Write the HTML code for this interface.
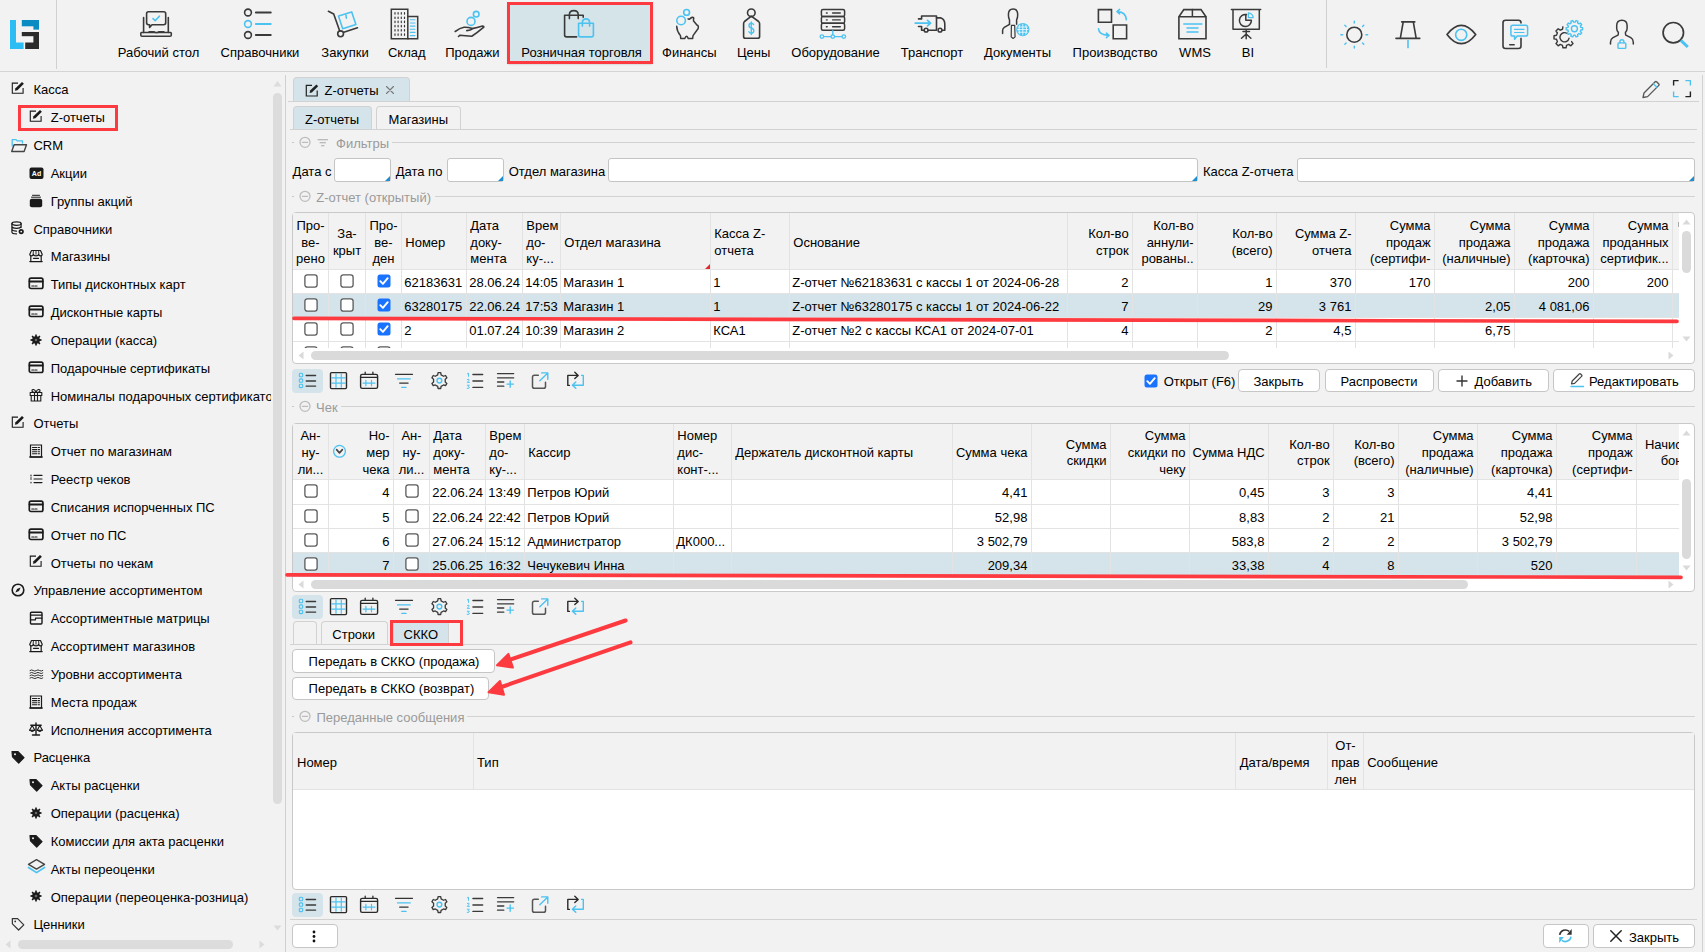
<!DOCTYPE html><html><head><meta charset="utf-8"><style>
html,body{margin:0;padding:0;}
body{width:1705px;height:952px;overflow:hidden;position:relative;background:#f2f2f2;font-family:"Liberation Sans",sans-serif;font-size:13px;color:#000;}
.a{position:absolute;box-sizing:border-box;}
.t{position:absolute;line-height:17px;white-space:nowrap;}
.g{color:#9a9a9a;}
</style></head><body>
<div class="a" style="left:0px;top:71px;width:1705px;height:1px;background:#d4d4d4"></div><div class="a" style="left:56px;top:0px;width:1px;height:69px;background:#d0d0d0"></div><div class="a" style="left:1326px;top:0px;width:1px;height:68px;background:#d0d0d0"></div><svg class="a" style="left:10px;top:20px" width="29" height="29" viewBox="0 0 29 29" fill="none" stroke-linecap="round" stroke-linejoin="round"><g stroke="none">
<rect x="0" y="0" width="6" height="29" fill="#2bbdf4"/><rect x="0" y="22.5" width="13.6" height="6.5" fill="#2bbdf4"/>
<rect x="11.8" y="0" width="17.2" height="6.3" fill="#0a8bc2"/><rect x="23.4" y="6" width="5.6" height="3.6" fill="#0a8bc2"/>
<rect x="11.8" y="12" width="17.2" height="4.2" fill="#2b2b2b"/><rect x="23.4" y="16" width="5.6" height="13" fill="#2b2b2b"/><rect x="15.2" y="22.5" width="13.8" height="6.5" fill="#2b2b2b"/>
</g></svg><div class="a" style="left:508px;top:3px;width:144px;height:60px;background:#d5e4e9;box-shadow:0 1px 2px rgba(0,0,0,0.25)"></div><div class="a" style="left:507px;top:2px;width:146px;height:62px;border:3px solid #fd3a3f"></div><div class="t " style="left:-41.5px;width:400px;text-align:center;top:44.0px;">Рабочий стол</div><div class="t " style="left:60.0px;width:400px;text-align:center;top:44.0px;">Справочники</div><div class="t " style="left:145.0px;width:400px;text-align:center;top:44.0px;">Закупки</div><div class="t " style="left:206.8px;width:400px;text-align:center;top:44.0px;">Склад</div><div class="t " style="left:272.3px;width:400px;text-align:center;top:44.0px;">Продажи</div><div class="t " style="left:381.6px;width:400px;text-align:center;top:44.0px;">Розничная торговля</div><div class="t " style="left:489.3px;width:400px;text-align:center;top:44.0px;">Финансы</div><div class="t " style="left:553.7px;width:400px;text-align:center;top:44.0px;">Цены</div><div class="t " style="left:635.5px;width:400px;text-align:center;top:44.0px;">Оборудование</div><div class="t " style="left:732.0px;width:400px;text-align:center;top:44.0px;">Транспорт</div><div class="t " style="left:817.6px;width:400px;text-align:center;top:44.0px;">Документы</div><div class="t " style="left:915.0px;width:400px;text-align:center;top:44.0px;">Производство</div><div class="t " style="left:995.0px;width:400px;text-align:center;top:44.0px;">WMS</div><div class="t " style="left:1048.0px;width:400px;text-align:center;top:44.0px;">BI</div><svg class="a" style="left:0;top:0" width="1705" height="72" fill="none" stroke-linecap="round" stroke-linejoin="round"><path d="M143.6 17.5V32.5M168.3 17.5V32.5" stroke="#3a3a3a" stroke-width="1.6" /><path d="M141.5 32.5H170.5Q171.3 32.5 171.3 33.5V35Q171.3 36.3 170 36.3H142Q140.8 36.3 140.8 35V33.5Q140.8 32.5 141.5 32.5Z" stroke="#3a3a3a" stroke-width="1.6" /><path d="M149 31.6H153.8L155.5 32.6H157.5L159 31.6H164" stroke="#3a3a3a" stroke-width="1.3" /><path d="M148.5 11.8H163.8Q165.7 11.8 165.7 13.7V22.8Q165.7 24.7 163.8 24.7H152L149.6 27.4V24.7H148.5Q146.6 24.7 146.6 22.8V13.7Q146.6 11.8 148.5 11.8Z" stroke="#3a3a3a" stroke-width="1.6" /><path d="M153 18.6L155.2 20.6L159.4 16.2" stroke="#4cc2f1" stroke-width="1.6" /><circle cx="248" cy="12.5" r="3.4" stroke="#3a3a3a" stroke-width="1.6" fill="none"/><path d="M255.8 12.5H270.8" stroke="#3a3a3a" stroke-width="1.8" /><circle cx="248" cy="24" r="3.4" stroke="#4cc2f1" stroke-width="1.6" fill="none"/><path d="M255.8 24H270.8" stroke="#4cc2f1" stroke-width="1.8" /><circle cx="248" cy="35" r="3.4" stroke="#3a3a3a" stroke-width="1.6" fill="none"/><path d="M255.8 35H270.8" stroke="#3a3a3a" stroke-width="1.8" /><path d="M328.4 11.3L333.7 14L339.8 31.3" stroke="#3a3a3a" stroke-width="1.6" /><circle cx="340.6" cy="33.8" r="2.9" stroke="#3a3a3a" stroke-width="1.6" fill="none"/><path d="M343.8 32.2L357.5 27.7" stroke="#3a3a3a" stroke-width="1.6" /><path d="M338.5 16.1L351.7 11.9L355.9 24.5L342.7 28.8Z" stroke="#4cc2f1" stroke-width="1.6" /><path d="M345.9 15L346.4 18.2" stroke="#4cc2f1" stroke-width="1.6" /><path d="M391.3 9.2H407.8V38.8H391.3Z" stroke="#3a3a3a" stroke-width="1.5" stroke-linejoin="miter"/><path d="M407.8 16.4H417.7V38.8H407.8" stroke="#3a3a3a" stroke-width="1.5" stroke-linejoin="miter"/><path d="M395 12.700000000000001V14.1M395 17.0V18.4M395 21.2V22.599999999999998M395 25.400000000000002V26.8M395 29.6V31.0M395 33.9V35.300000000000004M398.1 12.700000000000001V14.1M398.1 17.0V18.4M398.1 21.2V22.599999999999998M398.1 25.400000000000002V26.8M398.1 29.6V31.0M398.1 33.9V35.300000000000004M401.3 12.700000000000001V14.1M401.3 17.0V18.4M401.3 21.2V22.599999999999998M401.3 25.400000000000002V26.8M401.3 29.6V31.0M401.3 33.9V35.300000000000004M404.5 12.700000000000001V14.1M404.5 17.0V18.4M404.5 21.2V22.599999999999998M404.5 25.400000000000002V26.8M404.5 29.6V31.0M404.5 33.9V35.300000000000004" stroke="#3a3a3a" stroke-width="1.2" /><path d="M410.3 19.8H415M410.3 23H415M410.3 26.1H415M410.3 29.3H415M410.3 32.4H415M410.3 35.6H415" stroke="#4cc2f1" stroke-width="1.1" /><circle cx="471" cy="21.4" r="4.0" stroke="#4cc2f1" stroke-width="1.6" fill="none"/><circle cx="476.2" cy="14.2" r="2.8" stroke="#4cc2f1" stroke-width="1.6" fill="none"/><path d="M455.2 31.5Q460 28 464 27.3Q468 27 472.2 28.6Q471.6 30.4 466.8 30.6" stroke="#3a3a3a" stroke-width="1.6" /><path d="M458.5 36.5L460 35.2Q465 35.7 471.8 36.2Q477 33 483.8 27.2Q484 26 482.5 26Q477 27.5 472.2 28.6" stroke="#3a3a3a" stroke-width="1.6" /><path d="M583.2 17.2V15.3H564.6V35Q564.6 36.9 566.5 36.9H576.6" stroke="#3a3a3a" stroke-width="1.6" /><path d="M569.4 18.6V14.6Q569.4 10.6 573.8 10.6Q578.2 10.6 578.2 14.6V18.6" stroke="#3a3a3a" stroke-width="1.6" /><path d="M578.6 23.3H593.4V35Q593.4 36.9 591.5 36.9H580.5Q578.6 36.9 578.6 35Z" stroke="#4cc2f1" stroke-width="1.6" /><path d="M582.4 26.1V22.6Q582.4 18.9 586 18.9Q589.6 18.9 589.6 22.6V26.1" stroke="#4cc2f1" stroke-width="1.6" /><circle cx="681.1" cy="20.5" r="4.3" stroke="#4cc2f1" stroke-width="1.6" fill="none"/><circle cx="686.6" cy="12.4" r="2.9" stroke="#4cc2f1" stroke-width="1.6" fill="none"/><path d="M676.7 26.2Q676.8 31 680.3 35.4Q680.7 36.3 680.7 38.4H684.9Q685.5 36.3 686.6 36.3Q687.6 36.3 688.1 38.4H692.7Q692.7 36.3 693.2 35.4L696.9 30.2Q698.6 28.5 698.4 26.6Q698.2 25.4 696.9 25L693.6 21Q693.2 19.5 693.8 18.2Q693.2 17 692.3 17.2Q690.8 17.9 689.7 19Q688.8 19.4 688.1 18.9" stroke="#3a3a3a" stroke-width="1.5" /><circle cx="751.3" cy="12.8" r="3.8" stroke="#3a3a3a" stroke-width="1.6" fill="none"/><path d="M751.3 16.2L744.5 21.5Q743.6 22.4 743.6 23.8V36.5Q743.6 38.3 745.4 38.3H757.6Q759.6 38.3 759.6 36.5V23.8Q759.6 22.4 758.6 21.5Z" stroke="#3a3a3a" stroke-width="1.6" /><path d="M753.6 24.5Q753 23.3 751.3 23.3Q749 23.3 749 25.5Q749 27.6 751.3 28Q753.8 28.5 753.8 30.8Q753.8 33.2 751.3 33.2Q749.4 33.2 748.8 31.8M751.3 22V34.5" stroke="#4cc2f1" stroke-width="1.4" /><path d="M823 9.5H843Q844.6 9.5 844.6 11.0V15.100000000000001Q844.6 16.6 843 16.6H823Q821.4 16.6 821.4 15.100000000000001V11.0Q821.4 9.5 823 9.5Z" stroke="#3a3a3a" stroke-width="1.5" /><path d="M826.4 13.05H827.2M832.6 13.05H840.3" stroke="#3a3a3a" stroke-width="1.4" /><path d="M823 16.6H843Q844.6 16.6 844.6 18.1V21.7Q844.6 23.2 843 23.2H823Q821.4 23.2 821.4 21.7V18.1Q821.4 16.6 823 16.6Z" stroke="#3a3a3a" stroke-width="1.5" /><path d="M826.4 19.9H827.2M832.6 19.9H840.3" stroke="#3a3a3a" stroke-width="1.4" /><path d="M823 23.2H843Q844.6 23.2 844.6 24.7V28.7Q844.6 30.2 843 30.2H823Q821.4 30.2 821.4 28.7V24.7Q821.4 23.2 823 23.2Z" stroke="#3a3a3a" stroke-width="1.5" /><path d="M826.4 26.7H827.2M832.6 26.7H840.3" stroke="#3a3a3a" stroke-width="1.4" /><path d="M832.8 30.8V34.8M823.8 36.6H830.9M834.7 36.6H841.9" stroke="#4cc2f1" stroke-width="1.4" /><circle cx="821.9" cy="36.6" r="1.8" stroke="#4cc2f1" stroke-width="1.3" fill="none"/><circle cx="832.8" cy="36.6" r="1.8" stroke="#4cc2f1" stroke-width="1.3" fill="none"/><circle cx="843.8" cy="36.6" r="1.8" stroke="#4cc2f1" stroke-width="1.3" fill="none"/><path d="M918.5 18.9H921.6V16H936.5V30.2H928M924.2 30.2H921.6V26.5M918.5 26.5H921.6" stroke="#3a3a3a" stroke-width="1.6" /><path d="M936.5 17.9H941Q944.8 19.5 944.8 24V30.2H942" stroke="#3a3a3a" stroke-width="1.6" /><circle cx="926.1" cy="30.2" r="1.9" stroke="#3a3a3a" stroke-width="1.5" fill="none"/><circle cx="940" cy="30.2" r="1.9" stroke="#3a3a3a" stroke-width="1.5" fill="none"/><path d="M915.2 23.1H930.6M927.5 20.3L930.6 23.1L927.5 25.9" stroke="#4cc2f1" stroke-width="1.7" /><path d="M1009.5 24.3V19.8Q1008.4 18 1008.4 14.7Q1008.4 9 1013.1 9Q1017.7 9 1017.7 14.7Q1017.7 18 1016.6 19.8V24.3" stroke="#3a3a3a" stroke-width="1.5" /><path d="M1009.5 24.3L1004.3 27.4Q1002.6 28.6 1002.6 30.5V33.6" stroke="#3a3a3a" stroke-width="1.5" /><path d="M1011.4 25.4H1014.7L1015.1 36.9L1013.1 38.5L1011.2 36.9Z" stroke="#3a3a3a" stroke-width="1.2" /><circle cx="1022.8" cy="29.6" r="5.9" stroke="#4cc2f1" stroke-width="1.6" fill="#4cc2f1"/><path d="M1017.5 29.6H1028.1M1022.8 24.2V35M1019.7 25.2Q1018 29.6 1019.7 34M1025.9 25.2Q1027.6 29.6 1025.9 34M1018.3 27H1027.3M1018.3 32.2H1027.3" stroke="#fff" stroke-width="0.8" /><path d="M1098.4 9.6H1111.5V22.2H1098.4Z" stroke="#3a3a3a" stroke-width="1.6" stroke-linejoin="miter"/><path d="M1113.2 25H1126.6V38.7H1113.2Z" stroke="#3a3a3a" stroke-width="1.6" stroke-linejoin="miter"/><path d="M1126.3 19.8Q1126 12 1117.5 11.6M1119.6 9.4L1117 11.6L1119.6 13.8" stroke="#4cc2f1" stroke-width="1.6" /><path d="M1098.5 28.8Q1099 35 1108.5 35.4M1106.4 33.2L1109 35.4L1106.4 37.6" stroke="#4cc2f1" stroke-width="1.6" /><path d="M1183.8 9.6H1201L1206 16.8V38.7H1178.9V16.8Z" stroke="#3a3a3a" stroke-width="1.6" stroke-linejoin="miter"/><path d="M1179.2 16.8H1205.8M1192.4 9.6V16.8" stroke="#3a3a3a" stroke-width="1.5" /><path d="M1183.8 23.9H1201.9M1187 28H1198M1187 32.1H1198" stroke="#4cc2f1" stroke-width="1.5" /><path d="M1231.4 9.6H1260.7M1233 9.6V29.3H1259.3V9.6M1246.2 29.3V38.7M1241.5 38.2L1246.2 34L1250.9 38.2M1243 31.5H1249.5" stroke="#3a3a3a" stroke-width="1.5" /><path d="M1246.5 14.6A6 6 0 1 0 1251.4 20.3H1245.8V14.6" stroke="#3a3a3a" stroke-width="1.5" /><path d="M1248.4 12.8A5.5 5.5 0 0 1 1253.2 17.6H1248.4Z" stroke="#4cc2f1" stroke-width="1.3" /><path d="M1365.90 34.70L1367.70 34.70M1362.50 42.90L1363.78 44.18M1354.30 46.30L1354.30 48.10M1346.10 42.90L1344.82 44.18M1342.70 34.70L1340.90 34.70M1346.10 26.50L1344.82 25.22M1354.30 23.10L1354.30 21.30M1362.50 26.50L1363.78 25.22" stroke="#4cc2f1" stroke-width="1.4" /><circle cx="1354.3" cy="34.7" r="7.5" stroke="#3a3a3a" stroke-width="1.6" fill="none"/><path d="M1401.7 21.9H1414.8M1403.2 22L1400.3 38.4M1413.3 22L1416.2 38.4M1396 38.4H1419.8" stroke="#3a3a3a" stroke-width="1.6" /><path d="M1408 40.5V47.6" stroke="#4cc2f1" stroke-width="1.6" /><path d="M1447 34.5Q1454 25.3 1461.3 25.3Q1468.7 25.3 1475.7 34.5Q1468.7 43.7 1461.3 43.7Q1454 43.7 1447 34.5Z" stroke="#3a3a3a" stroke-width="1.7" /><circle cx="1461.2" cy="34.8" r="5.6" stroke="#4cc2f1" stroke-width="1.6" fill="none"/><path d="M1505.5 20.3H1518.5Q1521 20.3 1521 22.8V46Q1521 48.5 1518.5 48.5H1505.5Q1503 48.5 1503 46V22.8Q1503 20.3 1505.5 20.3Z" stroke="#3a3a3a" stroke-width="1.6" /><path d="M1509.7 44.8H1514.2" stroke="#3a3a3a" stroke-width="1.4" /><path d="M1512.8 25.3H1525.7Q1527.6 25.3 1527.6 27.2V34.2Q1527.6 36.1 1525.7 36.1H1517L1514.6 39.3V36.1H1512.8Q1510.9 36.1 1510.9 34.2V27.2Q1510.9 25.3 1512.8 25.3Z" stroke="#f2f2f2" stroke-width="3.5" fill="#f2f2f2"/><path d="M1512.8 25.3H1525.7Q1527.6 25.3 1527.6 27.2V34.2Q1527.6 36.1 1525.7 36.1H1517L1514.6 39.3V36.1H1512.8Q1510.9 36.1 1510.9 34.2V27.2Q1510.9 25.3 1512.8 25.3Z" stroke="#4cc2f1" stroke-width="1.5" /><path d="M1514.5 29.3H1524M1514.5 32.5H1524" stroke="#4cc2f1" stroke-width="1.2" /><path d="M1571.61 41.58L1573.03 43.60L1570.80 45.83L1568.78 44.41L1566.50 45.36L1566.08 47.78L1562.92 47.78L1562.50 45.36L1560.22 44.41L1558.20 45.83L1555.97 43.60L1557.39 41.58L1556.44 39.30L1554.02 38.88L1554.02 35.72L1556.44 35.30L1557.39 33.02L1555.97 31.00L1558.20 28.77L1560.22 30.19L1562.50 29.24L1562.92 26.82" stroke="#3a3a3a" stroke-width="1.4" /><path d="M1567.2 33.5A4.6 4.6 0 1 0 1569 38.3" stroke="#3a3a3a" stroke-width="1.4" /><path d="M1580.88 27.42L1582.64 27.71L1582.64 29.69L1580.88 29.98L1580.39 31.47L1581.65 32.74L1580.49 34.34L1578.89 33.54L1577.62 34.46L1577.89 36.23L1576.01 36.84L1575.19 35.25L1573.61 35.25L1572.79 36.84L1570.91 36.23L1571.18 34.46L1569.91 33.54L1568.31 34.34L1567.15 32.74L1568.41 31.47L1567.92 29.98L1566.16 29.69L1566.16 27.71L1567.92 27.42L1568.41 25.93L1567.15 24.66L1568.31 23.06L1569.91 23.86L1571.18 22.94L1570.91 21.17L1572.79 20.56L1573.61 22.15L1575.19 22.15L1576.01 20.56L1577.89 21.17L1577.62 22.94L1578.89 23.86L1580.49 23.06L1581.65 24.66L1580.39 25.93Z" stroke="#4cc2f1" stroke-width="1.4" /><circle cx="1574.4" cy="28.7" r="3.0" stroke="#4cc2f1" stroke-width="1.4" fill="none"/><path d="M1610.5 44V42.2Q1610.5 39.2 1613 37.7L1618 35.1Q1618.6 34 1618.3 32.2Q1616.7 30.6 1616.7 28.5V25.6Q1616.7 20.3 1621.9 20.3Q1627.1 20.3 1627.1 25.6V28.5Q1627.1 30.6 1625.5 32.2Q1625.2 34 1625.8 35.1L1630.8 37.7Q1633.3 39.2 1633.3 42.2V44" stroke="#3a3a3a" stroke-width="1.5" /><rect x="1618" y="42.9" width="7.8" height="5.5" rx="0.8" stroke="#4cc2f1" stroke-width="1.4" fill="#f2f2f2"/><path d="M1619.9 42.9V41.6Q1619.9 39.8 1621.9 39.8Q1623.9 39.8 1623.9 41.6V42.9" stroke="#4cc2f1" stroke-width="1.4" /><circle cx="1673.3" cy="32.7" r="10.2" stroke="#3a3a3a" stroke-width="1.7" fill="none"/><path d="M1680.8 40.3L1687.8 47" stroke="#4cc2f1" stroke-width="3" stroke-linecap="butt"/></svg><div class="a" style="left:285px;top:75px;width:1px;height:877px;background:#d0d0d0"></div><div class="a" style="left:0;top:72px;width:271px;height:868px;overflow:hidden"><div class="t " style="left:33.4px;top:9.4px;">Касса</div><div class="t " style="left:50.7px;top:37.2px;">Z-отчеты</div><div class="t " style="left:33.4px;top:65.1px;">CRM</div><div class="t " style="left:50.7px;top:92.9px;">Акции</div><div class="t " style="left:50.7px;top:120.7px;">Группы акций</div><div class="t " style="left:33.4px;top:148.5px;">Справочники</div><div class="t " style="left:50.7px;top:176.4px;">Магазины</div><div class="t " style="left:50.7px;top:204.2px;">Типы дисконтных карт</div><div class="t " style="left:50.7px;top:232.0px;">Дисконтные карты</div><div class="t " style="left:50.7px;top:259.9px;">Операции (касса)</div><div class="t " style="left:50.7px;top:287.7px;">Подарочные сертификаты</div><div class="t " style="left:50.7px;top:315.5px;">Номиналы подарочных сертификатов</div><div class="t " style="left:33.4px;top:343.4px;">Отчеты</div><div class="t " style="left:50.7px;top:371.2px;">Отчет по магазинам</div><div class="t " style="left:50.7px;top:399.0px;">Реестр чеков</div><div class="t " style="left:50.7px;top:426.9px;">Списания испорченных ПС</div><div class="t " style="left:50.7px;top:454.7px;">Отчет по ПС</div><div class="t " style="left:50.7px;top:482.5px;">Отчеты по чекам</div><div class="t " style="left:33.4px;top:510.3px;">Управление ассортиментом</div><div class="t " style="left:50.7px;top:538.2px;">Ассортиментные матрицы</div><div class="t " style="left:50.7px;top:566.0px;">Ассортимент магазинов</div><div class="t " style="left:50.7px;top:593.8px;">Уровни ассортимента</div><div class="t " style="left:50.7px;top:621.7px;">Места продаж</div><div class="t " style="left:50.7px;top:649.5px;">Исполнения ассортимента</div><div class="t " style="left:33.4px;top:677.3px;">Расценка</div><div class="t " style="left:50.7px;top:705.1px;">Акты расценки</div><div class="t " style="left:50.7px;top:733.0px;">Операции (расценка)</div><div class="t " style="left:50.7px;top:760.8px;">Комиссии для акта расценки</div><div class="t " style="left:50.7px;top:788.6px;">Акты переоценки</div><div class="t " style="left:50.7px;top:816.5px;">Операции (переоценка-розница)</div><div class="t " style="left:33.4px;top:844.3px;">Ценники</div></div><svg class="a" style="left:11.3px;top:82.2px;overflow:visible" width="14" height="14" fill="none" stroke-linecap="round" stroke-linejoin="round"><path d="M7 1.1H1.3V11.3H12.1V6" stroke="#1a1a1a" stroke-width="1.1" stroke-linecap="butt" stroke-linejoin="miter"/><path d="M3.9 8.8L4.5 6.3L11 -0.1L12.9 1.8L6.4 8.2Z" fill="#1a1a1a"/></svg><svg class="a" style="left:28.5px;top:110.0px;overflow:visible" width="14" height="14" fill="none" stroke-linecap="round" stroke-linejoin="round"><path d="M7 1.1H1.3V11.3H12.1V6" stroke="#1a1a1a" stroke-width="1.1" stroke-linecap="butt" stroke-linejoin="miter"/><path d="M3.9 8.8L4.5 6.3L11 -0.1L12.9 1.8L6.4 8.2Z" fill="#1a1a1a"/></svg><svg class="a" style="left:11.3px;top:137.9px;overflow:visible" width="14" height="14" fill="none" stroke-linecap="round" stroke-linejoin="round"><path d="M1.2 8V1.6H5L6.2 2.8H11.5V5" stroke="#4cc2f1" stroke-width="1.3"/><path d="M3.6 6.3H16L13.6 13H1.2Z" stroke="#444" stroke-width="1.4" transform="translate(-0.5,0.5)"/></svg><svg class="a" style="left:28.5px;top:165.7px;overflow:visible" width="14" height="14" fill="none" stroke-linecap="round" stroke-linejoin="round"><rect x="0.5" y="1.5" width="14" height="11.5" rx="2" fill="#1a1a1a"/><text x="7.5" y="10" font-family="Liberation Sans" font-weight="bold" font-size="7" fill="#fff" text-anchor="middle">Ad</text></svg><svg class="a" style="left:28.5px;top:193.5px;overflow:visible" width="14" height="14" fill="none" stroke-linecap="round" stroke-linejoin="round"><path d="M3.5 1.3H10.5M2.5 3.2H11.5" stroke="#1a1a1a" stroke-width="1"/><rect x="0.8" y="4.8" width="12.4" height="8.4" rx="2" fill="#1a1a1a"/></svg><svg class="a" style="left:11.3px;top:221.3px;overflow:visible" width="14" height="14" fill="none" stroke-linecap="round" stroke-linejoin="round"><ellipse cx="5.5" cy="2.6" rx="4.6" ry="1.8" stroke="#1a1a1a" stroke-width="1.2"/><path d="M0.9 2.6V11Q0.9 12.9 5.5 12.9M10.1 2.6V6.5M0.9 5.5Q1.5 7.3 5.5 7.3Q9.5 7.3 10.1 5.5M0.9 8.4Q1.5 10.1 5.5 10.2" stroke="#1a1a1a" stroke-width="1.2"/><circle cx="10.2" cy="10.6" r="2.6" fill="#1a1a1a"/><circle cx="10.2" cy="10.6" r="0.9" fill="#f2f2f2"/></svg><svg class="a" style="left:28.5px;top:249.2px;overflow:visible" width="14" height="14" fill="none" stroke-linecap="round" stroke-linejoin="round"><path d="M2.5 1.5H11.5L13.2 5.2Q13.2 6.8 11.5 6.8Q10 6.8 9.6 5.4Q9.2 6.8 7 6.8Q4.8 6.8 4.4 5.4Q4 6.8 2.5 6.8Q0.8 6.8 0.8 5.2Z" stroke="#1a1a1a" stroke-width="1.2"/><path d="M4.4 1.8L4.1 5.2M9.6 1.8L9.9 5.2M7 1.8V5.2" stroke="#1a1a1a" stroke-width="0.9"/><path d="M1.8 7V12.6H12.2V7M0.8 12.6H13.2M4.5 9.3H9.5" stroke="#1a1a1a" stroke-width="1.2"/></svg><svg class="a" style="left:28.5px;top:277.0px;overflow:visible" width="14" height="14" fill="none" stroke-linecap="round" stroke-linejoin="round"><rect x="0.3" y="1.1" width="13.6" height="10.4" rx="1.7" stroke="#1a1a1a" stroke-width="1.7"/><path d="M0.7 4.5H13.5" stroke="#1a1a1a" stroke-width="2.2"/><path d="M2.8 9H4.8M6 9H8" stroke="#1a1a1a" stroke-width="1.2"/></svg><svg class="a" style="left:28.5px;top:304.8px;overflow:visible" width="14" height="14" fill="none" stroke-linecap="round" stroke-linejoin="round"><rect x="0.3" y="1.1" width="13.6" height="10.4" rx="1.7" stroke="#1a1a1a" stroke-width="1.7"/><path d="M0.7 4.5H13.5" stroke="#1a1a1a" stroke-width="2.2"/><path d="M2.8 9H4.8M6 9H8" stroke="#1a1a1a" stroke-width="1.2"/></svg><svg class="a" style="left:28.5px;top:332.7px;overflow:visible" width="14" height="14" fill="none" stroke-linecap="round" stroke-linejoin="round"><path d="M10.79 6.09L12.55 6.23L12.55 7.77L10.79 7.91L10.33 9.04L11.46 10.38L10.38 11.46L9.04 10.33L7.91 10.79L7.77 12.55L6.23 12.55L6.09 10.79L4.96 10.33L3.62 11.46L2.54 10.38L3.67 9.04L3.21 7.91L1.45 7.77L1.45 6.23L3.21 6.09L3.67 4.96L2.54 3.62L3.62 2.54L4.96 3.67L6.09 3.21L6.23 1.45L7.77 1.45L7.91 3.21L9.04 3.67L10.38 2.54L11.46 3.62L10.33 4.96Z" fill="#1a1a1a"/><circle cx="7" cy="7" r="1.3" fill="#666"/></svg><svg class="a" style="left:28.5px;top:360.5px;overflow:visible" width="14" height="14" fill="none" stroke-linecap="round" stroke-linejoin="round"><rect x="0.3" y="1.1" width="13.6" height="10.4" rx="1.7" stroke="#1a1a1a" stroke-width="1.7"/><path d="M0.7 4.5H13.5" stroke="#1a1a1a" stroke-width="2.2"/><path d="M2.8 9H4.8M6 9H8" stroke="#1a1a1a" stroke-width="1.2"/></svg><svg class="a" style="left:28.5px;top:388.3px;overflow:visible" width="14" height="14" fill="none" stroke-linecap="round" stroke-linejoin="round"><rect x="1.2" y="4.5" width="11.6" height="3" stroke="#1a1a1a" stroke-width="1.1"/><path d="M2.2 7.5V13H11.8V7.5M5.5 4.5V13M8.5 4.5V13M5.5 4.3Q3 4.3 3 2.8Q3 1.3 4.6 1.5Q6.3 1.9 7 4.3Q7.7 1.9 9.4 1.5Q11 1.3 11 2.8Q11 4.3 8.5 4.3" stroke="#1a1a1a" stroke-width="1.1"/></svg><svg class="a" style="left:11.3px;top:416.2px;overflow:visible" width="14" height="14" fill="none" stroke-linecap="round" stroke-linejoin="round"><path d="M7 1.1H1.3V11.3H12.1V6" stroke="#1a1a1a" stroke-width="1.1" stroke-linecap="butt" stroke-linejoin="miter"/><path d="M3.9 8.8L4.5 6.3L11 -0.1L12.9 1.8L6.4 8.2Z" fill="#1a1a1a"/></svg><svg class="a" style="left:28.5px;top:444.0px;overflow:visible" width="14" height="14" fill="none" stroke-linecap="round" stroke-linejoin="round"><path d="M1.5 1H12.5V13H1.5Z" stroke="#1a1a1a" stroke-width="1.2" stroke-linejoin="miter"/><path d="M0.8 13H13.2" stroke="#1a1a1a" stroke-width="1.3"/><path d="M3.5 3.5H10.5M3.5 5.6H10.5M3.5 7.7H10.5M3.5 9.8H10.5" stroke="#1a1a1a" stroke-width="1.1"/><path d="M8.5 3V11" stroke="#f2f2f2" stroke-width="0.6"/></svg><svg class="a" style="left:28.5px;top:471.8px;overflow:visible" width="14" height="14" fill="none" stroke-linecap="round" stroke-linejoin="round"><path d="M2 3.2V3.6M2 6.8V7.2M2 10.4V10.8" stroke="#1a1a1a" stroke-width="1.2"/><path d="M5 3.4H13M5 7H13M5 10.6H13" stroke="#1a1a1a" stroke-width="1.1"/><path d="M2 5V6" stroke="#1a1a1a" stroke-width="0.8"/></svg><svg class="a" style="left:28.5px;top:499.6px;overflow:visible" width="14" height="14" fill="none" stroke-linecap="round" stroke-linejoin="round"><rect x="0.3" y="1.1" width="13.6" height="10.4" rx="1.7" stroke="#1a1a1a" stroke-width="1.7"/><path d="M0.7 4.5H13.5" stroke="#1a1a1a" stroke-width="2.2"/><path d="M2.8 9H4.8M6 9H8" stroke="#1a1a1a" stroke-width="1.2"/></svg><svg class="a" style="left:28.5px;top:527.5px;overflow:visible" width="14" height="14" fill="none" stroke-linecap="round" stroke-linejoin="round"><rect x="0.3" y="1.1" width="13.6" height="10.4" rx="1.7" stroke="#1a1a1a" stroke-width="1.7"/><path d="M0.7 4.5H13.5" stroke="#1a1a1a" stroke-width="2.2"/><path d="M2.8 9H4.8M6 9H8" stroke="#1a1a1a" stroke-width="1.2"/></svg><svg class="a" style="left:28.5px;top:555.3px;overflow:visible" width="14" height="14" fill="none" stroke-linecap="round" stroke-linejoin="round"><path d="M7 1.1H1.3V11.3H12.1V6" stroke="#1a1a1a" stroke-width="1.1" stroke-linecap="butt" stroke-linejoin="miter"/><path d="M3.9 8.8L4.5 6.3L11 -0.1L12.9 1.8L6.4 8.2Z" fill="#1a1a1a"/></svg><svg class="a" style="left:11.3px;top:583.1px;overflow:visible" width="14" height="14" fill="none" stroke-linecap="round" stroke-linejoin="round"><circle cx="7" cy="7" r="5.8" stroke="#1a1a1a" stroke-width="1.6"/><path d="M9.6 4.4L8 8L4.4 9.6L6 6Z" fill="#1a1a1a"/></svg><svg class="a" style="left:28.5px;top:611.0px;overflow:visible" width="14" height="14" fill="none" stroke-linecap="round" stroke-linejoin="round"><rect x="1.5" y="1.2" width="11.5" height="11.8" rx="1" stroke="#1a1a1a" stroke-width="1.4"/><path d="M1.8 4.2H12.8M6.5 7.2H12.8M1.8 8.8H6.5M6.5 7.2V8.8" stroke="#1a1a1a" stroke-width="1.2"/></svg><svg class="a" style="left:28.5px;top:638.8px;overflow:visible" width="14" height="14" fill="none" stroke-linecap="round" stroke-linejoin="round"><path d="M2.5 1.5H11.5L13.2 5.2Q13.2 6.8 11.5 6.8Q10 6.8 9.6 5.4Q9.2 6.8 7 6.8Q4.8 6.8 4.4 5.4Q4 6.8 2.5 6.8Q0.8 6.8 0.8 5.2Z" stroke="#1a1a1a" stroke-width="1.2"/><path d="M4.4 1.8L4.1 5.2M9.6 1.8L9.9 5.2M7 1.8V5.2" stroke="#1a1a1a" stroke-width="0.9"/><path d="M1.8 7V12.6H12.2V7M0.8 12.6H13.2M4.5 9.3H9.5" stroke="#1a1a1a" stroke-width="1.2"/></svg><svg class="a" style="left:28.5px;top:666.6px;overflow:visible" width="14" height="14" fill="none" stroke-linecap="round" stroke-linejoin="round"><path d="M1 3.5Q2.6 2.3 4.2 3.5T7.4 3.5T10.6 3.5T13.8 3.5" stroke="#1a1a1a" stroke-width="0.9"/><path d="M1 6Q2.6 4.8 4.2 6T7.4 6T10.6 6T13.8 6" stroke="#1a1a1a" stroke-width="0.9"/><path d="M1 8.5Q2.6 7.3 4.2 8.5T7.4 8.5T10.6 8.5T13.8 8.5" stroke="#1a1a1a" stroke-width="0.9"/><path d="M1 11Q2.6 9.8 4.2 11T7.4 11T10.6 11T13.8 11" stroke="#1a1a1a" stroke-width="0.9"/></svg><svg class="a" style="left:28.5px;top:694.5px;overflow:visible" width="14" height="14" fill="none" stroke-linecap="round" stroke-linejoin="round"><path d="M1.5 1H12.5V13H1.5Z" stroke="#1a1a1a" stroke-width="1.2" stroke-linejoin="miter"/><path d="M0.8 13H13.2" stroke="#1a1a1a" stroke-width="1.3"/><path d="M3.5 3.5H10.5M3.5 5.6H10.5M3.5 7.7H10.5M3.5 9.8H10.5" stroke="#1a1a1a" stroke-width="1.1"/><path d="M8.5 3V11" stroke="#f2f2f2" stroke-width="0.6"/></svg><svg class="a" style="left:28.5px;top:722.3px;overflow:visible" width="14" height="14" fill="none" stroke-linecap="round" stroke-linejoin="round"><path d="M7 1V12.5M3.5 13H10.5M1.8 3.2H12.2" stroke="#1a1a1a" stroke-width="1.4"/><path d="M3.2 3.5L0.6 8.3H5.8Z M10.8 3.5L8.2 8.3H13.4Z" stroke="#1a1a1a" stroke-width="1.1"/><path d="M0.6 8.3Q3.2 11 5.8 8.3M8.2 8.3Q10.8 11 13.4 8.3" fill="#1a1a1a" stroke="#1a1a1a" stroke-width="1"/></svg><svg class="a" style="left:11.3px;top:750.1px;overflow:visible" width="14" height="14" fill="none" stroke-linecap="round" stroke-linejoin="round"><path d="M1 1.5H6.8L13 7.7L7.7 13L1.5 6.8Z" fill="#1a1a1a" stroke="#1a1a1a" stroke-width="1.2"/><circle cx="4" cy="4.3" r="1" fill="#f2f2f2"/></svg><svg class="a" style="left:28.5px;top:778.0px;overflow:visible" width="14" height="14" fill="none" stroke-linecap="round" stroke-linejoin="round"><path d="M1 1.5H6.8L13 7.7L7.7 13L1.5 6.8Z" fill="#1a1a1a" stroke="#1a1a1a" stroke-width="1.2"/><circle cx="4" cy="4.3" r="1" fill="#f2f2f2"/></svg><svg class="a" style="left:28.5px;top:805.8px;overflow:visible" width="14" height="14" fill="none" stroke-linecap="round" stroke-linejoin="round"><path d="M10.79 6.09L12.55 6.23L12.55 7.77L10.79 7.91L10.33 9.04L11.46 10.38L10.38 11.46L9.04 10.33L7.91 10.79L7.77 12.55L6.23 12.55L6.09 10.79L4.96 10.33L3.62 11.46L2.54 10.38L3.67 9.04L3.21 7.91L1.45 7.77L1.45 6.23L3.21 6.09L3.67 4.96L2.54 3.62L3.62 2.54L4.96 3.67L6.09 3.21L6.23 1.45L7.77 1.45L7.91 3.21L9.04 3.67L10.38 2.54L11.46 3.62L10.33 4.96Z" fill="#1a1a1a"/><circle cx="7" cy="7" r="1.3" fill="#666"/></svg><svg class="a" style="left:28.5px;top:833.6px;overflow:visible" width="14" height="14" fill="none" stroke-linecap="round" stroke-linejoin="round"><path d="M1 1.5H6.8L13 7.7L7.7 13L1.5 6.8Z" fill="#1a1a1a" stroke="#1a1a1a" stroke-width="1.2"/><circle cx="4" cy="4.3" r="1" fill="#f2f2f2"/></svg><svg class="a" style="left:28.5px;top:861.4px;overflow:visible" width="14" height="14" fill="none" stroke-linecap="round" stroke-linejoin="round"><path d="M7.5 -1.4L15.5 3.4L7.5 8.1L-0.5 3.4Z" stroke="#444" stroke-width="1.4"/><path d="M-0.5 6.5L7.5 11.6L15.5 6.5" stroke="#4cc2f1" stroke-width="1.7"/></svg><svg class="a" style="left:28.5px;top:889.3px;overflow:visible" width="14" height="14" fill="none" stroke-linecap="round" stroke-linejoin="round"><path d="M10.79 6.09L12.55 6.23L12.55 7.77L10.79 7.91L10.33 9.04L11.46 10.38L10.38 11.46L9.04 10.33L7.91 10.79L7.77 12.55L6.23 12.55L6.09 10.79L4.96 10.33L3.62 11.46L2.54 10.38L3.67 9.04L3.21 7.91L1.45 7.77L1.45 6.23L3.21 6.09L3.67 4.96L2.54 3.62L3.62 2.54L4.96 3.67L6.09 3.21L6.23 1.45L7.77 1.45L7.91 3.21L9.04 3.67L10.38 2.54L11.46 3.62L10.33 4.96Z" fill="#1a1a1a"/><circle cx="7" cy="7" r="1.3" fill="#666"/></svg><svg class="a" style="left:11.3px;top:917.1px;overflow:visible" width="14" height="14" fill="none" stroke-linecap="round" stroke-linejoin="round"><path d="M1.3 1.6H6.6L12.8 7.8L7.6 13L1.4 6.8Z" stroke="#333" stroke-width="1.2"/><circle cx="4.2" cy="4.4" r="0.9" fill="#333"/></svg><div class="a" style="left:18px;top:105px;width:100px;height:26px;border:3px solid #fd3a3f"></div><div class="a" style="left:273px;top:92.5px;width:9px;height:711px;background:#dcdcdc;border-radius:5px"></div><svg class="a" style="left:273px;top:80px" width="9" height="7" viewBox="0 0 9 7" fill="none" stroke-linecap="round" stroke-linejoin="round"><path d="M0.5 6.5 L4.5 1 L8.5 6.5Z" fill="#dcdcdc" stroke="none"/></svg><svg class="a" style="left:273px;top:925px" width="9" height="6" viewBox="0 0 9 6" fill="none" stroke-linecap="round" stroke-linejoin="round"><path d="M0.5 0.5 L4.5 5.5 L8.5 0.5Z" fill="#dcdcdc" stroke="none"/></svg><div class="a" style="left:18px;top:940px;width:215px;height:9px;background:#dcdcdc;border-radius:5px"></div><svg class="a" style="left:4.5px;top:940px" width="6" height="9" viewBox="0 0 6 9" fill="none" stroke-linecap="round" stroke-linejoin="round"><path d="M5.5 0.5 L0.5 4.5 L5.5 8.5Z" fill="#dcdcdc" stroke="none"/></svg><svg class="a" style="left:259px;top:940px" width="6" height="9" viewBox="0 0 6 9" fill="none" stroke-linecap="round" stroke-linejoin="round"><path d="M0.5 0.5 L5.5 4.5 L0.5 8.5Z" fill="#dcdcdc" stroke="none"/></svg><div class="a" style="left:1702px;top:75px;width:1px;height:877px;background:#d2d2d2"></div><div class="a" style="left:293px;top:77px;width:117px;height:25px;background:#d4e4ea;border:1px solid #d2d2d2;border-bottom:none;border-radius:4px 4px 0 0"></div><div class="t " style="left:324.6px;top:81.7px;">Z-отчеты</div><div class="a" style="left:288px;top:101px;width:1411px;height:1px;background:#d2d2d2"></div><div class="a" style="left:293px;top:106px;width:79px;height:24px;background:#d4e4ea;border:1px solid #d2d2d2;border-bottom:none;border-radius:4px 4px 0 0"></div><div class="a" style="left:376px;top:106px;width:85px;height:24px;background:#f2f2f2;border:1px solid #d2d2d2;border-bottom:none;border-radius:4px 4px 0 0"></div><div class="t " style="left:305px;top:110.7px;">Z-отчеты</div><div class="t " style="left:388.5px;top:110.7px;">Магазины</div><div class="a" style="left:290px;top:129px;width:1407px;height:1px;background:#d2d2d2"></div><div class="a" style="left:292px;top:142px;width:2px;height:1px;background:#c8c8c8"></div><svg class="a" style="left:299px;top:136px" width="13" height="13" viewBox="0 0 13 13" fill="none" stroke-linecap="round" stroke-linejoin="round"><circle cx="6" cy="6.3" r="5" stroke="#bdbdbd" stroke-width="1.3"/><path d="M3.4 6.3H8.6" stroke="#bdbdbd" stroke-width="1.3"/></svg><svg class="a" style="left:317px;top:139px" width="11" height="8" viewBox="0 0 11 8" fill="none" stroke-linecap="round" stroke-linejoin="round"><path d="M1 0.8H10.5M3 3.8H8.5M4.5 6.8H7" stroke="#a8a8a8" stroke-width="1.1"/></svg><div class="t g" style="left:336px;top:135.2px;">Фильтры</div><div class="a" style="left:392px;top:142px;width:1303px;height:1px;background:#d2d2d2"></div><div class="t " style="left:292.6px;top:163.0px;">Дата с</div><div class="t " style="left:395.7px;top:163.0px;">Дата по</div><div class="t " style="left:508.7px;top:163.0px;">Отдел магазина</div><div class="t " style="left:1203px;top:163.0px;">Касса Z-отчета</div><div class="a" style="left:334px;top:158px;width:57px;height:24px;background:#fff;border:1px solid #c4c4c4;border-radius:3px"></div><svg class="a" style="left:385px;top:176px" width="5" height="5" viewBox="0 0 5 5" fill="none" stroke-linecap="round" stroke-linejoin="round"><path d="M5 0V5H0Z" fill="#1f8ed0" stroke="none"/></svg><div class="a" style="left:447px;top:158px;width:57px;height:24px;background:#fff;border:1px solid #c4c4c4;border-radius:3px"></div><svg class="a" style="left:498px;top:176px" width="5" height="5" viewBox="0 0 5 5" fill="none" stroke-linecap="round" stroke-linejoin="round"><path d="M5 0V5H0Z" fill="#1f8ed0" stroke="none"/></svg><div class="a" style="left:608px;top:158px;width:590px;height:24px;background:#fff;border:1px solid #c4c4c4;border-radius:3px"></div><svg class="a" style="left:1192px;top:176px" width="5" height="5" viewBox="0 0 5 5" fill="none" stroke-linecap="round" stroke-linejoin="round"><path d="M5 0V5H0Z" fill="#1f8ed0" stroke="none"/></svg><div class="a" style="left:1297px;top:158px;width:398px;height:24px;background:#fff;border:1px solid #c4c4c4;border-radius:3px"></div><svg class="a" style="left:1689px;top:176px" width="5" height="5" viewBox="0 0 5 5" fill="none" stroke-linecap="round" stroke-linejoin="round"><path d="M5 0V5H0Z" fill="#1f8ed0" stroke="none"/></svg><div class="a" style="left:292px;top:196px;width:2px;height:1px;background:#c8c8c8"></div><svg class="a" style="left:299px;top:190px" width="13" height="13" viewBox="0 0 13 13" fill="none" stroke-linecap="round" stroke-linejoin="round"><circle cx="6" cy="6.3" r="5" stroke="#bdbdbd" stroke-width="1.3"/><path d="M3.4 6.3H8.6" stroke="#bdbdbd" stroke-width="1.3"/></svg><div class="t g" style="left:316.3px;top:189.2px;">Z-отчет (открытый)</div><div class="a" style="left:435px;top:196px;width:1260px;height:1px;background:#d2d2d2"></div><div class="a" style="left:292px;top:212px;width:1403px;height:152px;background:#fff;border:1px solid #c9c9c9;border-radius:4px"></div><div class="a" style="left:293px;top:213px;width:1386px;height:56px;background:#f2f2f2"></div><div class="a" style="left:293px;top:269px;width:1386px;height:1px;background:#e3e3e3"></div><div class="a" style="left:293px;top:294px;width:1386px;height:23px;background:#d4e4ea"></div><div class="a" style="left:293px;top:293px;width:1386px;height:1px;background:#e3e3e3"></div><div class="a" style="left:293px;top:317px;width:1386px;height:1px;background:#e3e3e3"></div><div class="a" style="left:293px;top:341px;width:1386px;height:1px;background:#e3e3e3"></div><div class="a" style="left:328px;top:213px;width:1px;height:134.5px;background:#e3e3e3"></div><div class="a" style="left:365px;top:213px;width:1px;height:134.5px;background:#e3e3e3"></div><div class="a" style="left:401px;top:213px;width:1px;height:134.5px;background:#e3e3e3"></div><div class="a" style="left:466px;top:213px;width:1px;height:134.5px;background:#e3e3e3"></div><div class="a" style="left:522px;top:213px;width:1px;height:134.5px;background:#e3e3e3"></div><div class="a" style="left:560px;top:213px;width:1px;height:134.5px;background:#e3e3e3"></div><div class="a" style="left:710px;top:213px;width:1px;height:134.5px;background:#e3e3e3"></div><div class="a" style="left:789px;top:213px;width:1px;height:134.5px;background:#e3e3e3"></div><div class="a" style="left:1067px;top:213px;width:1px;height:134.5px;background:#e3e3e3"></div><div class="a" style="left:1132px;top:213px;width:1px;height:134.5px;background:#e3e3e3"></div><div class="a" style="left:1197px;top:213px;width:1px;height:134.5px;background:#e3e3e3"></div><div class="a" style="left:1276px;top:213px;width:1px;height:134.5px;background:#e3e3e3"></div><div class="a" style="left:1355px;top:213px;width:1px;height:134.5px;background:#e3e3e3"></div><div class="a" style="left:1434px;top:213px;width:1px;height:134.5px;background:#e3e3e3"></div><div class="a" style="left:1514px;top:213px;width:1px;height:134.5px;background:#e3e3e3"></div><div class="a" style="left:1593px;top:213px;width:1px;height:134.5px;background:#e3e3e3"></div><div class="a" style="left:1672px;top:213px;width:1px;height:134.5px;background:#e3e3e3"></div><div class="a" style="left:293px;top:213px;width:35px;height:56px;overflow:hidden"><div class="t" style="left:0;width:35px;text-align:center;top:3.6px">Про-</div><div class="t" style="left:0;width:35px;text-align:center;top:20.5px">ве-</div><div class="t" style="left:0;width:35px;text-align:center;top:37.4px">рено</div></div><div class="a" style="left:329px;top:213px;width:36px;height:56px;overflow:hidden"><div class="t" style="left:0;width:36px;text-align:center;top:12.1px">За-</div><div class="t" style="left:0;width:36px;text-align:center;top:29.0px">крыт</div></div><div class="a" style="left:366px;top:213px;width:35px;height:56px;overflow:hidden"><div class="t" style="left:0;width:35px;text-align:center;top:3.6px">Про-</div><div class="t" style="left:0;width:35px;text-align:center;top:20.5px">ве-</div><div class="t" style="left:0;width:35px;text-align:center;top:37.4px">ден</div></div><div class="a" style="left:402px;top:213px;width:64px;height:56px;overflow:hidden"><div class="t " style="left:3.3px;top:20.5px;">Номер</div></div><div class="a" style="left:467px;top:213px;width:55px;height:56px;overflow:hidden"><div class="t " style="left:3.3px;top:3.6px;">Дата</div><div class="t " style="left:3.3px;top:20.5px;">доку-</div><div class="t " style="left:3.3px;top:37.4px;">мента</div></div><div class="a" style="left:523px;top:213px;width:37px;height:56px;overflow:hidden"><div class="t " style="left:3.3px;top:3.6px;">Врем</div><div class="t " style="left:3.3px;top:20.5px;">до-</div><div class="t " style="left:3.3px;top:37.4px;">ку-...</div></div><div class="a" style="left:561px;top:213px;width:149px;height:56px;overflow:hidden"><div class="t " style="left:3.3px;top:20.5px;">Отдел магазина</div></div><div class="a" style="left:711px;top:213px;width:78px;height:56px;overflow:hidden"><div class="t " style="left:3.3px;top:12.1px;">Касса Z-</div><div class="t " style="left:3.3px;top:29.0px;">отчета</div></div><div class="a" style="left:790px;top:213px;width:277px;height:56px;overflow:hidden"><div class="t " style="left:3.3px;top:20.5px;">Основание</div></div><div class="a" style="left:1068px;top:213px;width:64px;height:56px;overflow:hidden"><div class="t" style="right:3.4px;top:12.1px">Кол-во</div><div class="t" style="right:3.4px;top:29.0px">строк</div></div><div class="a" style="left:1133px;top:213px;width:64px;height:56px;overflow:hidden"><div class="t" style="right:3.4px;top:3.6px">Кол-во</div><div class="t" style="right:3.4px;top:20.5px">аннули-</div><div class="t" style="right:3.4px;top:37.4px">рованы..</div></div><div class="a" style="left:1198px;top:213px;width:78px;height:56px;overflow:hidden"><div class="t" style="right:3.4px;top:12.1px">Кол-во</div><div class="t" style="right:3.4px;top:29.0px">(всего)</div></div><div class="a" style="left:1277px;top:213px;width:78px;height:56px;overflow:hidden"><div class="t" style="right:3.4px;top:12.1px">Сумма Z-</div><div class="t" style="right:3.4px;top:29.0px">отчета</div></div><div class="a" style="left:1356px;top:213px;width:78px;height:56px;overflow:hidden"><div class="t" style="right:3.4px;top:3.6px">Сумма</div><div class="t" style="right:3.4px;top:20.5px">продаж</div><div class="t" style="right:3.4px;top:37.4px">(сертифи-</div></div><div class="a" style="left:1435px;top:213px;width:79px;height:56px;overflow:hidden"><div class="t" style="right:3.4px;top:3.6px">Сумма</div><div class="t" style="right:3.4px;top:20.5px">продажа</div><div class="t" style="right:3.4px;top:37.4px">(наличные)</div></div><div class="a" style="left:1515px;top:213px;width:78px;height:56px;overflow:hidden"><div class="t" style="right:3.4px;top:3.6px">Сумма</div><div class="t" style="right:3.4px;top:20.5px">продажа</div><div class="t" style="right:3.4px;top:37.4px">(карточка)</div></div><div class="a" style="left:1594px;top:213px;width:78px;height:56px;overflow:hidden"><div class="t" style="right:3.4px;top:3.6px">Сумма</div><div class="t" style="right:3.4px;top:20.5px">проданных</div><div class="t" style="right:3.4px;top:37.4px">сертифик...</div></div><div class="a" style="left:293px;top:270px;width:1386px;height:77.5px;overflow:hidden"><svg class="a" style="left:10.5px;top:4px" width="14" height="14" viewBox="0 0 14 14" fill="none" stroke-linecap="round" stroke-linejoin="round"><rect x="0.9" y="0.9" width="12.2" height="12.2" rx="2.3" fill="#fff" stroke="#5a5a5a" stroke-width="1.3"/></svg><svg class="a" style="left:47.0px;top:4px" width="14" height="14" viewBox="0 0 14 14" fill="none" stroke-linecap="round" stroke-linejoin="round"><rect x="0.9" y="0.9" width="12.2" height="12.2" rx="2.3" fill="#fff" stroke="#5a5a5a" stroke-width="1.3"/></svg><svg class="a" style="left:83.5px;top:4px" width="14" height="14" viewBox="0 0 14 14" fill="none" stroke-linecap="round" stroke-linejoin="round"><rect x="0.5" y="0.5" width="13" height="13" rx="2.5" fill="#1a73ff" stroke="none"/><path d="M3.3 7.2L5.9 9.8L10.7 4.2" stroke="#fff" stroke-width="1.9"/></svg><div class="t " style="left:111.3px;top:4.0px;">62183631</div><div class="t " style="left:176.3px;top:4.0px;">28.06.24</div><div class="t " style="left:232.3px;top:4.0px;">14:05</div><div class="t " style="left:270.3px;top:4.0px;">Магазин 1</div><div class="t " style="left:420.3px;top:4.0px;">1</div><div class="t " style="left:499.3px;top:4.0px;">Z-отчет №62183631 с кассы 1 от 2024-06-28</div><div class="t" style="right:550.6px;top:4.0px">2</div><div class="t" style="right:406.6px;top:4.0px">1</div><div class="t" style="right:327.6px;top:4.0px">370</div><div class="t" style="right:248.6px;top:4.0px">170</div><div class="t" style="right:89.6px;top:4.0px">200</div><div class="t" style="right:10.6px;top:4.0px">200</div><svg class="a" style="left:10.5px;top:28px" width="14" height="14" viewBox="0 0 14 14" fill="none" stroke-linecap="round" stroke-linejoin="round"><rect x="0.9" y="0.9" width="12.2" height="12.2" rx="2.3" fill="#fff" stroke="#5a5a5a" stroke-width="1.3"/></svg><svg class="a" style="left:47.0px;top:28px" width="14" height="14" viewBox="0 0 14 14" fill="none" stroke-linecap="round" stroke-linejoin="round"><rect x="0.9" y="0.9" width="12.2" height="12.2" rx="2.3" fill="#fff" stroke="#5a5a5a" stroke-width="1.3"/></svg><svg class="a" style="left:83.5px;top:28px" width="14" height="14" viewBox="0 0 14 14" fill="none" stroke-linecap="round" stroke-linejoin="round"><rect x="0.5" y="0.5" width="13" height="13" rx="2.5" fill="#1a73ff" stroke="none"/><path d="M3.3 7.2L5.9 9.8L10.7 4.2" stroke="#fff" stroke-width="1.9"/></svg><div class="t " style="left:111.3px;top:28.0px;">63280175</div><div class="t " style="left:176.3px;top:28.0px;">22.06.24</div><div class="t " style="left:232.3px;top:28.0px;">17:53</div><div class="t " style="left:270.3px;top:28.0px;">Магазин 1</div><div class="t " style="left:420.3px;top:28.0px;">1</div><div class="t " style="left:499.3px;top:28.0px;">Z-отчет №63280175 с кассы 1 от 2024-06-22</div><div class="t" style="right:550.6px;top:28.0px">7</div><div class="t" style="right:406.6px;top:28.0px">29</div><div class="t" style="right:327.6px;top:28.0px">3 761</div><div class="t" style="right:168.6px;top:28.0px">2,05</div><div class="t" style="right:89.6px;top:28.0px">4 081,06</div><svg class="a" style="left:10.5px;top:52px" width="14" height="14" viewBox="0 0 14 14" fill="none" stroke-linecap="round" stroke-linejoin="round"><rect x="0.9" y="0.9" width="12.2" height="12.2" rx="2.3" fill="#fff" stroke="#5a5a5a" stroke-width="1.3"/></svg><svg class="a" style="left:47.0px;top:52px" width="14" height="14" viewBox="0 0 14 14" fill="none" stroke-linecap="round" stroke-linejoin="round"><rect x="0.9" y="0.9" width="12.2" height="12.2" rx="2.3" fill="#fff" stroke="#5a5a5a" stroke-width="1.3"/></svg><svg class="a" style="left:83.5px;top:52px" width="14" height="14" viewBox="0 0 14 14" fill="none" stroke-linecap="round" stroke-linejoin="round"><rect x="0.5" y="0.5" width="13" height="13" rx="2.5" fill="#1a73ff" stroke="none"/><path d="M3.3 7.2L5.9 9.8L10.7 4.2" stroke="#fff" stroke-width="1.9"/></svg><div class="t " style="left:111.3px;top:52.0px;">2</div><div class="t " style="left:176.3px;top:52.0px;">01.07.24</div><div class="t " style="left:232.3px;top:52.0px;">10:39</div><div class="t " style="left:270.3px;top:52.0px;">Магазин 2</div><div class="t " style="left:420.3px;top:52.0px;">КСА1</div><div class="t " style="left:499.3px;top:52.0px;">Z-отчет №2 с кассы КСА1 от 2024-07-01</div><div class="t" style="right:550.6px;top:52.0px">4</div><div class="t" style="right:406.6px;top:52.0px">2</div><div class="t" style="right:327.6px;top:52.0px">4,5</div><div class="t" style="right:168.6px;top:52.0px">6,75</div><svg class="a" style="left:10.5px;top:76px" width="14" height="14" viewBox="0 0 14 14" fill="none" stroke-linecap="round" stroke-linejoin="round"><rect x="0.9" y="0.9" width="12.2" height="12.2" rx="2.3" fill="#fff" stroke="#5a5a5a" stroke-width="1.3"/></svg><svg class="a" style="left:47.0px;top:76px" width="14" height="14" viewBox="0 0 14 14" fill="none" stroke-linecap="round" stroke-linejoin="round"><rect x="0.9" y="0.9" width="12.2" height="12.2" rx="2.3" fill="#fff" stroke="#5a5a5a" stroke-width="1.3"/></svg><svg class="a" style="left:83.5px;top:76px" width="14" height="14" viewBox="0 0 14 14" fill="none" stroke-linecap="round" stroke-linejoin="round"><rect x="0.9" y="0.9" width="12.2" height="12.2" rx="2.3" fill="#fff" stroke="#5a5a5a" stroke-width="1.3"/></svg></div><svg class="a" style="left:297.5px;top:351px" width="6" height="9" viewBox="0 0 6 9" fill="none" stroke-linecap="round" stroke-linejoin="round"><path d="M5.5 0.5L0.5 4.5L5.5 8.5Z" fill="#dadada" stroke="none"/></svg><div class="a" style="left:311px;top:351px;width:918.4000000000001px;height:9px;background:#dadada;border-radius:5px"></div><svg class="a" style="left:1668px;top:351px" width="6" height="9" viewBox="0 0 6 9" fill="none" stroke-linecap="round" stroke-linejoin="round"><path d="M0.5 0.5L5.5 4.5L0.5 8.5Z" fill="#dadada" stroke="none"/></svg><svg class="a" style="left:1682px;top:218.5px" width="9" height="6" viewBox="0 0 9 6" fill="none" stroke-linecap="round" stroke-linejoin="round"><path d="M0.5 5.5L4.5 0.5L8.5 5.5Z" fill="#dadada" stroke="none"/></svg><div class="a" style="left:1682px;top:231px;width:9px;height:42px;background:#dadada;border-radius:5px"></div><svg class="a" style="left:1682px;top:335.5px" width="9" height="6" viewBox="0 0 9 6" fill="none" stroke-linecap="round" stroke-linejoin="round"><path d="M0.5 0.5L4.5 5.5L8.5 0.5Z" fill="#dadada" stroke="none"/></svg><svg class="a" style="left:705px;top:264px" width="5" height="5" viewBox="0 0 5 5" fill="none" stroke-linecap="round" stroke-linejoin="round"><path d="M5 0V5H0Z" fill="#e8262b" stroke="none"/></svg><svg class="a" style="left:1143.5px;top:373.5px" width="14" height="14" viewBox="0 0 14 14" fill="none" stroke-linecap="round" stroke-linejoin="round"><rect x="0.5" y="0.5" width="13" height="13" rx="2.5" fill="#1a73ff" stroke="none"/><path d="M3.3 7.2L5.9 9.8L10.7 4.2" stroke="#fff" stroke-width="1.9"/></svg><div class="t " style="left:1163.7px;top:372.5px;">Открыт (F6)</div><div class="a" style="left:1238px;top:369px;width:82px;height:23px;background:#fff;border:1px solid #c6c6c6;border-radius:4px"></div><div class="t " style="left:1078.5px;width:400px;text-align:center;top:373.0px;">Закрыть</div><div class="a" style="left:1325px;top:369px;width:109px;height:23px;background:#fff;border:1px solid #c6c6c6;border-radius:4px"></div><div class="t " style="left:1179.0px;width:400px;text-align:center;top:373.0px;">Распровести</div><div class="a" style="left:1438px;top:369px;width:111px;height:23px;background:#fff;border:1px solid #c6c6c6;border-radius:4px"></div><div class="t " style="left:1474.5px;top:373.0px;">Добавить</div><div class="a" style="left:1553px;top:369px;width:142px;height:23px;background:#fff;border:1px solid #c6c6c6;border-radius:4px"></div><div class="t " style="left:1589px;top:373.0px;">Редактировать</div><div class="a" style="left:292px;top:406px;width:2px;height:1px;background:#c8c8c8"></div><svg class="a" style="left:299px;top:400px" width="13" height="13" viewBox="0 0 13 13" fill="none" stroke-linecap="round" stroke-linejoin="round"><circle cx="6" cy="6.3" r="5" stroke="#bdbdbd" stroke-width="1.3"/><path d="M3.4 6.3H8.6" stroke="#bdbdbd" stroke-width="1.3"/></svg><div class="t g" style="left:316px;top:399.2px;">Чек</div><div class="a" style="left:341px;top:406px;width:1354px;height:1px;background:#d2d2d2"></div><div class="a" style="left:292px;top:423px;width:1403px;height:169px;background:#fff;border:1px solid #c9c9c9;border-radius:4px"></div><div class="a" style="left:293px;top:424px;width:1386px;height:55px;background:#f2f2f2"></div><div class="a" style="left:293px;top:479px;width:1386px;height:1px;background:#e3e3e3"></div><div class="a" style="left:293px;top:553px;width:1386px;height:24px;background:#d4e4ea"></div><div class="a" style="left:293px;top:504px;width:1386px;height:1px;background:#e3e3e3"></div><div class="a" style="left:293px;top:528px;width:1386px;height:1px;background:#e3e3e3"></div><div class="a" style="left:293px;top:552px;width:1386px;height:1px;background:#e3e3e3"></div><div class="a" style="left:328px;top:424px;width:1px;height:152.5px;background:#e3e3e3"></div><div class="a" style="left:393px;top:424px;width:1px;height:152.5px;background:#e3e3e3"></div><div class="a" style="left:429px;top:424px;width:1px;height:152.5px;background:#e3e3e3"></div><div class="a" style="left:485px;top:424px;width:1px;height:152.5px;background:#e3e3e3"></div><div class="a" style="left:524px;top:424px;width:1px;height:152.5px;background:#e3e3e3"></div><div class="a" style="left:673px;top:424px;width:1px;height:152.5px;background:#e3e3e3"></div><div class="a" style="left:731px;top:424px;width:1px;height:152.5px;background:#e3e3e3"></div><div class="a" style="left:952px;top:424px;width:1px;height:152.5px;background:#e3e3e3"></div><div class="a" style="left:1031px;top:424px;width:1px;height:152.5px;background:#e3e3e3"></div><div class="a" style="left:1110px;top:424px;width:1px;height:152.5px;background:#e3e3e3"></div><div class="a" style="left:1189px;top:424px;width:1px;height:152.5px;background:#e3e3e3"></div><div class="a" style="left:1268px;top:424px;width:1px;height:152.5px;background:#e3e3e3"></div><div class="a" style="left:1333px;top:424px;width:1px;height:152.5px;background:#e3e3e3"></div><div class="a" style="left:1398px;top:424px;width:1px;height:152.5px;background:#e3e3e3"></div><div class="a" style="left:1477px;top:424px;width:1px;height:152.5px;background:#e3e3e3"></div><div class="a" style="left:1556px;top:424px;width:1px;height:152.5px;background:#e3e3e3"></div><div class="a" style="left:1636px;top:424px;width:1px;height:152.5px;background:#e3e3e3"></div><div class="a" style="left:293px;top:424px;width:35px;height:55px;overflow:hidden"><div class="t" style="left:0;width:35px;text-align:center;top:3.1px">Ан-</div><div class="t" style="left:0;width:35px;text-align:center;top:20.0px">ну-</div><div class="t" style="left:0;width:35px;text-align:center;top:36.9px">ли...</div></div><div class="a" style="left:329px;top:424px;width:64px;height:55px;overflow:hidden"><div class="t" style="right:3.4px;top:3.1px">Но-</div><div class="t" style="right:3.4px;top:20.0px">мер</div><div class="t" style="right:3.4px;top:36.9px">чека</div></div><div class="a" style="left:394px;top:424px;width:35px;height:55px;overflow:hidden"><div class="t" style="left:0;width:35px;text-align:center;top:3.1px">Ан-</div><div class="t" style="left:0;width:35px;text-align:center;top:20.0px">ну-</div><div class="t" style="left:0;width:35px;text-align:center;top:36.9px">ли...</div></div><div class="a" style="left:430px;top:424px;width:55px;height:55px;overflow:hidden"><div class="t " style="left:3.3px;top:3.1px;">Дата</div><div class="t " style="left:3.3px;top:20.0px;">доку-</div><div class="t " style="left:3.3px;top:36.9px;">мента</div></div><div class="a" style="left:486px;top:424px;width:38px;height:55px;overflow:hidden"><div class="t " style="left:3.3px;top:3.1px;">Врем</div><div class="t " style="left:3.3px;top:20.0px;">до-</div><div class="t " style="left:3.3px;top:36.9px;">ку-...</div></div><div class="a" style="left:525px;top:424px;width:148px;height:55px;overflow:hidden"><div class="t " style="left:3.3px;top:20.0px;">Кассир</div></div><div class="a" style="left:674px;top:424px;width:57px;height:55px;overflow:hidden"><div class="t " style="left:3.3px;top:3.1px;">Номер</div><div class="t " style="left:3.3px;top:20.0px;">дис-</div><div class="t " style="left:3.3px;top:36.9px;">конт-...</div></div><div class="a" style="left:732px;top:424px;width:220px;height:55px;overflow:hidden"><div class="t " style="left:3.3px;top:20.0px;">Держатель дисконтной карты</div></div><div class="a" style="left:953px;top:424px;width:78px;height:55px;overflow:hidden"><div class="t" style="right:3.4px;top:20.0px">Сумма чека</div></div><div class="a" style="left:1032px;top:424px;width:78px;height:55px;overflow:hidden"><div class="t" style="right:3.4px;top:11.6px">Сумма</div><div class="t" style="right:3.4px;top:28.4px">скидки</div></div><div class="a" style="left:1111px;top:424px;width:78px;height:55px;overflow:hidden"><div class="t" style="right:3.4px;top:3.1px">Сумма</div><div class="t" style="right:3.4px;top:20.0px">скидки по</div><div class="t" style="right:3.4px;top:36.9px">чеку</div></div><div class="a" style="left:1190px;top:424px;width:78px;height:55px;overflow:hidden"><div class="t" style="right:3.4px;top:20.0px">Сумма НДС</div></div><div class="a" style="left:1269px;top:424px;width:64px;height:55px;overflow:hidden"><div class="t" style="right:3.4px;top:11.6px">Кол-во</div><div class="t" style="right:3.4px;top:28.4px">строк</div></div><div class="a" style="left:1334px;top:424px;width:64px;height:55px;overflow:hidden"><div class="t" style="right:3.4px;top:11.6px">Кол-во</div><div class="t" style="right:3.4px;top:28.4px">(всего)</div></div><div class="a" style="left:1399px;top:424px;width:78px;height:55px;overflow:hidden"><div class="t" style="right:3.4px;top:3.1px">Сумма</div><div class="t" style="right:3.4px;top:20.0px">продажа</div><div class="t" style="right:3.4px;top:36.9px">(наличные)</div></div><div class="a" style="left:1478px;top:424px;width:78px;height:55px;overflow:hidden"><div class="t" style="right:3.4px;top:3.1px">Сумма</div><div class="t" style="right:3.4px;top:20.0px">продажа</div><div class="t" style="right:3.4px;top:36.9px">(карточка)</div></div><div class="a" style="left:1557px;top:424px;width:79px;height:55px;overflow:hidden"><div class="t" style="right:3.4px;top:3.1px">Сумма</div><div class="t" style="right:3.4px;top:20.0px">продаж</div><div class="t" style="right:3.4px;top:36.9px">(сертифи-</div></div><div class="a" style="left:1637px;top:424px;width:42px;height:55px;overflow:hidden"><div class="t" style="left:0;width:82px;text-align:center;top:11.6px">Начислено</div><div class="t" style="left:0;width:82px;text-align:center;top:28.4px">бонус</div></div><div class="a" style="left:293px;top:480px;width:1386px;height:96.5px;overflow:hidden"><svg class="a" style="left:10.5px;top:4px" width="14" height="14" viewBox="0 0 14 14" fill="none" stroke-linecap="round" stroke-linejoin="round"><rect x="0.9" y="0.9" width="12.2" height="12.2" rx="2.3" fill="#fff" stroke="#5a5a5a" stroke-width="1.3"/></svg><div class="t" style="right:1289.6px;top:4.0px">4</div><svg class="a" style="left:111.5px;top:4px" width="14" height="14" viewBox="0 0 14 14" fill="none" stroke-linecap="round" stroke-linejoin="round"><rect x="0.9" y="0.9" width="12.2" height="12.2" rx="2.3" fill="#fff" stroke="#5a5a5a" stroke-width="1.3"/></svg><div class="t " style="left:139.3px;top:4.0px;">22.06.24</div><div class="t " style="left:195.3px;top:4.0px;">13:49</div><div class="t " style="left:234.3px;top:4.0px;">Петров Юрий</div><div class="t" style="right:651.6px;top:4.0px">4,41</div><div class="t" style="right:414.6px;top:4.0px">0,45</div><div class="t" style="right:349.6px;top:4.0px">3</div><div class="t" style="right:284.6px;top:4.0px">3</div><div class="t" style="right:126.6px;top:4.0px">4,41</div><svg class="a" style="left:10.5px;top:29px" width="14" height="14" viewBox="0 0 14 14" fill="none" stroke-linecap="round" stroke-linejoin="round"><rect x="0.9" y="0.9" width="12.2" height="12.2" rx="2.3" fill="#fff" stroke="#5a5a5a" stroke-width="1.3"/></svg><div class="t" style="right:1289.6px;top:29.0px">5</div><svg class="a" style="left:111.5px;top:29px" width="14" height="14" viewBox="0 0 14 14" fill="none" stroke-linecap="round" stroke-linejoin="round"><rect x="0.9" y="0.9" width="12.2" height="12.2" rx="2.3" fill="#fff" stroke="#5a5a5a" stroke-width="1.3"/></svg><div class="t " style="left:139.3px;top:29.0px;">22.06.24</div><div class="t " style="left:195.3px;top:29.0px;">22:42</div><div class="t " style="left:234.3px;top:29.0px;">Петров Юрий</div><div class="t" style="right:651.6px;top:29.0px">52,98</div><div class="t" style="right:414.6px;top:29.0px">8,83</div><div class="t" style="right:349.6px;top:29.0px">2</div><div class="t" style="right:284.6px;top:29.0px">21</div><div class="t" style="right:126.6px;top:29.0px">52,98</div><svg class="a" style="left:10.5px;top:53px" width="14" height="14" viewBox="0 0 14 14" fill="none" stroke-linecap="round" stroke-linejoin="round"><rect x="0.9" y="0.9" width="12.2" height="12.2" rx="2.3" fill="#fff" stroke="#5a5a5a" stroke-width="1.3"/></svg><div class="t" style="right:1289.6px;top:53.0px">6</div><svg class="a" style="left:111.5px;top:53px" width="14" height="14" viewBox="0 0 14 14" fill="none" stroke-linecap="round" stroke-linejoin="round"><rect x="0.9" y="0.9" width="12.2" height="12.2" rx="2.3" fill="#fff" stroke="#5a5a5a" stroke-width="1.3"/></svg><div class="t " style="left:139.3px;top:53.0px;">27.06.24</div><div class="t " style="left:195.3px;top:53.0px;">15:12</div><div class="t " style="left:234.3px;top:53.0px;">Администратор</div><div class="t " style="left:383.3px;top:53.0px;">ДК000...</div><div class="t" style="right:651.6px;top:53.0px">3 502,79</div><div class="t" style="right:414.6px;top:53.0px">583,8</div><div class="t" style="right:349.6px;top:53.0px">2</div><div class="t" style="right:284.6px;top:53.0px">2</div><div class="t" style="right:126.6px;top:53.0px">3 502,79</div><svg class="a" style="left:10.5px;top:77px" width="14" height="14" viewBox="0 0 14 14" fill="none" stroke-linecap="round" stroke-linejoin="round"><rect x="0.9" y="0.9" width="12.2" height="12.2" rx="2.3" fill="#fff" stroke="#5a5a5a" stroke-width="1.3"/></svg><div class="t" style="right:1289.6px;top:77.0px">7</div><svg class="a" style="left:111.5px;top:77px" width="14" height="14" viewBox="0 0 14 14" fill="none" stroke-linecap="round" stroke-linejoin="round"><rect x="0.9" y="0.9" width="12.2" height="12.2" rx="2.3" fill="#fff" stroke="#5a5a5a" stroke-width="1.3"/></svg><div class="t " style="left:139.3px;top:77.0px;">25.06.25</div><div class="t " style="left:195.3px;top:77.0px;">16:32</div><div class="t " style="left:234.3px;top:77.0px;">Чечукевич Инна</div><div class="t" style="right:651.6px;top:77.0px">209,34</div><div class="t" style="right:414.6px;top:77.0px">33,38</div><div class="t" style="right:349.6px;top:77.0px">4</div><div class="t" style="right:284.6px;top:77.0px">8</div><div class="t" style="right:126.6px;top:77.0px">520</div></div><svg class="a" style="left:297.5px;top:580px" width="6" height="9" viewBox="0 0 6 9" fill="none" stroke-linecap="round" stroke-linejoin="round"><path d="M5.5 0.5L0.5 4.5L5.5 8.5Z" fill="#dadada" stroke="none"/></svg><div class="a" style="left:311px;top:580px;width:1156.5px;height:9px;background:#dadada;border-radius:5px"></div><svg class="a" style="left:1668px;top:580px" width="6" height="9" viewBox="0 0 6 9" fill="none" stroke-linecap="round" stroke-linejoin="round"><path d="M0.5 0.5L5.5 4.5L0.5 8.5Z" fill="#dadada" stroke="none"/></svg><svg class="a" style="left:1682px;top:430px" width="9" height="6" viewBox="0 0 9 6" fill="none" stroke-linecap="round" stroke-linejoin="round"><path d="M0.5 5.5L4.5 0.5L8.5 5.5Z" fill="#dadada" stroke="none"/></svg><div class="a" style="left:1682px;top:479px;width:9px;height:80px;background:#dadada;border-radius:5px"></div><svg class="a" style="left:1682px;top:565px" width="9" height="6" viewBox="0 0 9 6" fill="none" stroke-linecap="round" stroke-linejoin="round"><path d="M0.5 0.5L4.5 5.5L8.5 0.5Z" fill="#dadada" stroke="none"/></svg><div class="a" style="left:292px;top:369px;width:31px;height:24px;background:#d4e4ea;border-radius:4px"></div><svg class="a" style="left:292px;top:368.6px" width="300" height="24" fill="none" stroke-linecap="round" stroke-linejoin="round"><rect x="7.3" y="4.3" width="3.4" height="3.4" rx="1" stroke="#4cc2f1" stroke-width="1.1"/><rect x="7.3" y="9.9" width="3.4" height="3.4" rx="1" stroke="#4cc2f1" stroke-width="1.1"/><rect x="7.3" y="15.2" width="3.4" height="3.4" rx="1" stroke="#4cc2f1" stroke-width="1.1"/><path d="M14.2 6.5H23.6M14.2 12H23.6M14.2 17.2H23.6" stroke="#3a3a3a" stroke-width="1.3"/><rect x="38.5" y="3.6" width="16" height="16" rx="1" stroke="#2a2a2a" stroke-width="1.4"/><path d="M44 4.3V18.8M49.3 4.3V18.8M39.2 8.8H53.8M39.2 14.1H53.8" stroke="#4cc2f1" stroke-width="1.2" stroke-linecap="butt"/><rect x="68.6" y="5.4" width="17" height="14" rx="1.6" stroke="#2a2a2a" stroke-width="1.4"/><path d="M69 8.4H85.2M73.2 3.2V5.4M80.9 3.2V5.4" stroke="#2a2a2a" stroke-width="1.3"/><path d="M71 14.1H83M73.9 11.4V16.8M79.5 11.4V16.8" stroke="#4cc2f1" stroke-width="1.2"/><path d="M103.5 5.3H120.5M107.7 14.1H116.1" stroke="#333" stroke-width="1.3"/><path d="M105.6 9.9H118.2M109.8 18.4H114" stroke="#4cc2f1" stroke-width="1.4"/><path d="M145.70 5.85L146.07 3.71L148.73 3.71L149.10 5.85L151.53 7.25L153.56 6.50L154.90 8.81L153.23 10.20L153.23 13.00L154.90 14.39L153.56 16.70L151.53 15.95L149.10 17.35L148.73 19.49L146.07 19.49L145.70 17.35L143.27 15.95L141.24 16.70L139.90 14.39L141.57 13.00L141.57 10.20L139.90 8.81L141.24 6.50L143.27 7.25Z" stroke="#3a3a3a" stroke-width="1.3"/><circle cx="147.4" cy="11.6" r="2.4" stroke="#4cc2f1" stroke-width="1.4"/><path d="M175.3 4.9L176.5 4.2V7.4M175.3 10.6Q176.2 9.8 177 10.4Q177.5 11.2 175.3 13.4H177.4M175.3 16.2H177.3L176.1 17.5Q177.5 17.7 177.3 18.9Q176.7 19.9 175.2 19.4" stroke="#4cc2f1" stroke-width="0.95"/><path d="M180.9 5.5H190.7M180.9 12H190.7M180.9 18.4H190.7" stroke="#3a3a3a" stroke-width="1.3"/><path d="M205.5 4.6H221.7M205.5 8.8H221.7M205.5 13H211.8M205.5 17.2H211.8" stroke="#3a3a3a" stroke-width="1.3"/><path d="M215 15.1H221.4M218.2 11.9V18.3" stroke="#4cc2f1" stroke-width="1.4"/><path d="M246.3 6.2H242.4Q240.5 6.2 240.5 8.1V17.4Q240.5 19.3 242.4 19.3H251.6Q253.5 19.3 253.5 17.4V13.2" stroke="#555" stroke-width="1.5"/><path d="M247.8 11.7L255.6 4.2M249.6 3.9H255.8V10.3" stroke="#4cc2f1" stroke-width="1.4"/><path d="M277.4 16.4H275.8V6.4H286.2M282.8 3.3L286.2 6.4L282.8 9.6" stroke="#2a2a2a" stroke-width="1.4"/><path d="M289.6 6.4H291.3V16.2H280.4M283.8 13L280.4 16.2L283.8 19.3" stroke="#4cc2f1" stroke-width="1.4"/></svg><div class="a" style="left:292px;top:595px;width:31px;height:24px;background:#d4e4ea;border-radius:4px"></div><svg class="a" style="left:292px;top:595.0px" width="300" height="24" fill="none" stroke-linecap="round" stroke-linejoin="round"><rect x="7.3" y="4.3" width="3.4" height="3.4" rx="1" stroke="#4cc2f1" stroke-width="1.1"/><rect x="7.3" y="9.9" width="3.4" height="3.4" rx="1" stroke="#4cc2f1" stroke-width="1.1"/><rect x="7.3" y="15.2" width="3.4" height="3.4" rx="1" stroke="#4cc2f1" stroke-width="1.1"/><path d="M14.2 6.5H23.6M14.2 12H23.6M14.2 17.2H23.6" stroke="#3a3a3a" stroke-width="1.3"/><rect x="38.5" y="3.6" width="16" height="16" rx="1" stroke="#2a2a2a" stroke-width="1.4"/><path d="M44 4.3V18.8M49.3 4.3V18.8M39.2 8.8H53.8M39.2 14.1H53.8" stroke="#4cc2f1" stroke-width="1.2" stroke-linecap="butt"/><rect x="68.6" y="5.4" width="17" height="14" rx="1.6" stroke="#2a2a2a" stroke-width="1.4"/><path d="M69 8.4H85.2M73.2 3.2V5.4M80.9 3.2V5.4" stroke="#2a2a2a" stroke-width="1.3"/><path d="M71 14.1H83M73.9 11.4V16.8M79.5 11.4V16.8" stroke="#4cc2f1" stroke-width="1.2"/><path d="M103.5 5.3H120.5M107.7 14.1H116.1" stroke="#333" stroke-width="1.3"/><path d="M105.6 9.9H118.2M109.8 18.4H114" stroke="#4cc2f1" stroke-width="1.4"/><path d="M145.70 5.85L146.07 3.71L148.73 3.71L149.10 5.85L151.53 7.25L153.56 6.50L154.90 8.81L153.23 10.20L153.23 13.00L154.90 14.39L153.56 16.70L151.53 15.95L149.10 17.35L148.73 19.49L146.07 19.49L145.70 17.35L143.27 15.95L141.24 16.70L139.90 14.39L141.57 13.00L141.57 10.20L139.90 8.81L141.24 6.50L143.27 7.25Z" stroke="#3a3a3a" stroke-width="1.3"/><circle cx="147.4" cy="11.6" r="2.4" stroke="#4cc2f1" stroke-width="1.4"/><path d="M175.3 4.9L176.5 4.2V7.4M175.3 10.6Q176.2 9.8 177 10.4Q177.5 11.2 175.3 13.4H177.4M175.3 16.2H177.3L176.1 17.5Q177.5 17.7 177.3 18.9Q176.7 19.9 175.2 19.4" stroke="#4cc2f1" stroke-width="0.95"/><path d="M180.9 5.5H190.7M180.9 12H190.7M180.9 18.4H190.7" stroke="#3a3a3a" stroke-width="1.3"/><path d="M205.5 4.6H221.7M205.5 8.8H221.7M205.5 13H211.8M205.5 17.2H211.8" stroke="#3a3a3a" stroke-width="1.3"/><path d="M215 15.1H221.4M218.2 11.9V18.3" stroke="#4cc2f1" stroke-width="1.4"/><path d="M246.3 6.2H242.4Q240.5 6.2 240.5 8.1V17.4Q240.5 19.3 242.4 19.3H251.6Q253.5 19.3 253.5 17.4V13.2" stroke="#555" stroke-width="1.5"/><path d="M247.8 11.7L255.6 4.2M249.6 3.9H255.8V10.3" stroke="#4cc2f1" stroke-width="1.4"/><path d="M277.4 16.4H275.8V6.4H286.2M282.8 3.3L286.2 6.4L282.8 9.6" stroke="#2a2a2a" stroke-width="1.4"/><path d="M289.6 6.4H291.3V16.2H280.4M283.8 13L280.4 16.2L283.8 19.3" stroke="#4cc2f1" stroke-width="1.4"/></svg><div class="a" style="left:292px;top:893px;width:31px;height:24px;background:#d4e4ea;border-radius:4px"></div><svg class="a" style="left:292px;top:893.0px" width="300" height="24" fill="none" stroke-linecap="round" stroke-linejoin="round"><rect x="7.3" y="4.3" width="3.4" height="3.4" rx="1" stroke="#4cc2f1" stroke-width="1.1"/><rect x="7.3" y="9.9" width="3.4" height="3.4" rx="1" stroke="#4cc2f1" stroke-width="1.1"/><rect x="7.3" y="15.2" width="3.4" height="3.4" rx="1" stroke="#4cc2f1" stroke-width="1.1"/><path d="M14.2 6.5H23.6M14.2 12H23.6M14.2 17.2H23.6" stroke="#3a3a3a" stroke-width="1.3"/><rect x="38.5" y="3.6" width="16" height="16" rx="1" stroke="#2a2a2a" stroke-width="1.4"/><path d="M44 4.3V18.8M49.3 4.3V18.8M39.2 8.8H53.8M39.2 14.1H53.8" stroke="#4cc2f1" stroke-width="1.2" stroke-linecap="butt"/><rect x="68.6" y="5.4" width="17" height="14" rx="1.6" stroke="#2a2a2a" stroke-width="1.4"/><path d="M69 8.4H85.2M73.2 3.2V5.4M80.9 3.2V5.4" stroke="#2a2a2a" stroke-width="1.3"/><path d="M71 14.1H83M73.9 11.4V16.8M79.5 11.4V16.8" stroke="#4cc2f1" stroke-width="1.2"/><path d="M103.5 5.3H120.5M107.7 14.1H116.1" stroke="#333" stroke-width="1.3"/><path d="M105.6 9.9H118.2M109.8 18.4H114" stroke="#4cc2f1" stroke-width="1.4"/><path d="M145.70 5.85L146.07 3.71L148.73 3.71L149.10 5.85L151.53 7.25L153.56 6.50L154.90 8.81L153.23 10.20L153.23 13.00L154.90 14.39L153.56 16.70L151.53 15.95L149.10 17.35L148.73 19.49L146.07 19.49L145.70 17.35L143.27 15.95L141.24 16.70L139.90 14.39L141.57 13.00L141.57 10.20L139.90 8.81L141.24 6.50L143.27 7.25Z" stroke="#3a3a3a" stroke-width="1.3"/><circle cx="147.4" cy="11.6" r="2.4" stroke="#4cc2f1" stroke-width="1.4"/><path d="M175.3 4.9L176.5 4.2V7.4M175.3 10.6Q176.2 9.8 177 10.4Q177.5 11.2 175.3 13.4H177.4M175.3 16.2H177.3L176.1 17.5Q177.5 17.7 177.3 18.9Q176.7 19.9 175.2 19.4" stroke="#4cc2f1" stroke-width="0.95"/><path d="M180.9 5.5H190.7M180.9 12H190.7M180.9 18.4H190.7" stroke="#3a3a3a" stroke-width="1.3"/><path d="M205.5 4.6H221.7M205.5 8.8H221.7M205.5 13H211.8M205.5 17.2H211.8" stroke="#3a3a3a" stroke-width="1.3"/><path d="M215 15.1H221.4M218.2 11.9V18.3" stroke="#4cc2f1" stroke-width="1.4"/><path d="M246.3 6.2H242.4Q240.5 6.2 240.5 8.1V17.4Q240.5 19.3 242.4 19.3H251.6Q253.5 19.3 253.5 17.4V13.2" stroke="#555" stroke-width="1.5"/><path d="M247.8 11.7L255.6 4.2M249.6 3.9H255.8V10.3" stroke="#4cc2f1" stroke-width="1.4"/><path d="M277.4 16.4H275.8V6.4H286.2M282.8 3.3L286.2 6.4L282.8 9.6" stroke="#2a2a2a" stroke-width="1.4"/><path d="M289.6 6.4H291.3V16.2H280.4M283.8 13L280.4 16.2L283.8 19.3" stroke="#4cc2f1" stroke-width="1.4"/></svg><svg class="a" style="left:305px;top:83.5px" width="14" height="14" viewBox="0 0 14 14" fill="none" stroke-linecap="round" stroke-linejoin="round"><path d="M7 1.3H1.3V12H12.2V6.6" stroke="#222" stroke-width="1.2" stroke-linecap="butt" stroke-linejoin="miter"/><path d="M4.6 9L5.1 6.6L11.4 0.4L13.2 2.2L6.9 8.4Z" fill="#222" stroke="none"/></svg><svg class="a" style="left:385.5px;top:85.5px" width="8" height="8" viewBox="0 0 8 8" fill="none" stroke-linecap="round" stroke-linejoin="round"><path d="M0.5 0.5L7.5 7.5M7.5 0.5L0.5 7.5" stroke="#777" stroke-width="1.1"/></svg><svg class="a" style="left:1641px;top:80px" width="20" height="19" viewBox="0 0 20 19" fill="none" stroke-linecap="round" stroke-linejoin="round"><path d="M2 17.5L3 13L14.2 1.8C14.6 1.4 15.2 1.4 15.6 1.8L17.8 4C18.2 4.4 18.2 5 17.8 5.4L6.6 16.6Z" stroke="#555" stroke-width="1.3"/><path d="M12.3 3.7L16 7.3" stroke="#4cc2f1" stroke-width="1.3"/></svg><svg class="a" style="left:1672px;top:79px" width="20" height="20" viewBox="0 0 20 20" fill="none" stroke-linecap="round" stroke-linejoin="round"><path d="M1.6 6.6V1.6H6.6" stroke="#222" stroke-width="1.4" stroke-linecap="butt"/><path d="M13.4 1.6H18.4V6.6" stroke="#4cc2f1" stroke-width="1.4" stroke-linecap="butt"/><path d="M1.6 12.6V17.6H6.6" stroke="#4cc2f1" stroke-width="1.4" stroke-linecap="butt"/><path d="M13.4 17.6H18.4V12.6" stroke="#222" stroke-width="1.4" stroke-linecap="butt"/></svg><svg class="a" style="left:1456px;top:374.5px" width="12" height="12" viewBox="0 0 12 12" fill="none" stroke-linecap="round" stroke-linejoin="round"><path d="M6 0.5V11.5M0.5 6H11.5" stroke="#333" stroke-width="1.4" stroke-linecap="butt"/></svg><svg class="a" style="left:1570px;top:372.5px" width="15" height="15" viewBox="0 0 15 15" fill="none" stroke-linecap="round" stroke-linejoin="round"><path d="M1.5 11L2.2 8L9.2 1C9.6 0.6 10.2 0.6 10.6 1L11.6 2C12 2.4 12 3 11.6 3.4L4.6 10.4Z" stroke="#444" stroke-width="1.2"/><path d="M1 13.5H13.5" stroke="#4cc2f1" stroke-width="1.4"/></svg><div class="a" style="left:293px;top:621px;width:24px;height:23px;background:#f2f2f2;border:1px solid #d2d2d2;border-bottom:none;border-radius:4px 4px 0 0"></div><div class="a" style="left:321px;top:621px;width:67px;height:23px;background:#f2f2f2;border:1px solid #d2d2d2;border-bottom:none;border-radius:4px 4px 0 0"></div><div class="a" style="left:393px;top:621px;width:56px;height:23px;background:#d4e4ea;border:1px solid #d2d2d2;border-bottom:none;border-radius:4px 4px 0 0"></div><div class="t " style="left:332.3px;top:625.8px;">Строки</div><div class="t " style="left:403.5px;top:625.8px;">СККО</div><div class="a" style="left:290px;top:644px;width:1407px;height:1px;background:#d2d2d2"></div><div class="a" style="left:390px;top:620px;width:73px;height:26px;border:3px solid #fd3a3f"></div><div class="a" style="left:292px;top:649px;width:203px;height:24px;background:#fff;border:1px solid #c6c6c6;border-radius:4px"></div><div class="t " style="left:308.6px;top:652.6px;">Передать в СККО (продажа)</div><div class="a" style="left:292px;top:677px;width:197px;height:23px;background:#fff;border:1px solid #c6c6c6;border-radius:4px"></div><div class="t " style="left:308.6px;top:680.3px;">Передать в СККО (возврат)</div><div class="a" style="left:292px;top:716px;width:2px;height:1px;background:#c8c8c8"></div><svg class="a" style="left:299px;top:710px" width="13" height="13" viewBox="0 0 13 13" fill="none" stroke-linecap="round" stroke-linejoin="round"><circle cx="6" cy="6.3" r="5" stroke="#bdbdbd" stroke-width="1.3"/><path d="M3.4 6.3H8.6" stroke="#bdbdbd" stroke-width="1.3"/></svg><div class="t g" style="left:316.5px;top:709.2px;">Переданные сообщения</div><div class="a" style="left:467px;top:716px;width:1228px;height:1px;background:#d2d2d2"></div><div class="a" style="left:292px;top:732px;width:1403px;height:158px;background:#fff;border:1px solid #c9c9c9;border-radius:4px"></div><div class="a" style="left:293px;top:733px;width:1401px;height:56px;background:#f2f2f2"></div><div class="a" style="left:293px;top:789px;width:1401px;height:1px;background:#e3e3e3"></div><div class="a" style="left:473px;top:733px;width:1px;height:56px;background:#e3e3e3"></div><div class="a" style="left:1235px;top:733px;width:1px;height:56px;background:#e3e3e3"></div><div class="a" style="left:1327px;top:733px;width:1px;height:56px;background:#e3e3e3"></div><div class="a" style="left:1363px;top:733px;width:1px;height:56px;background:#e3e3e3"></div><div class="t " style="left:297px;top:753.8px;">Номер</div><div class="t " style="left:477px;top:753.8px;">Тип</div><div class="t " style="left:1239.7px;top:753.8px;">Дата/время</div><div class="t " style="left:1367.2px;top:753.8px;">Сообщение</div><div class="t " style="left:1145.5px;width:400px;text-align:center;top:737.0px;">От-</div><div class="t " style="left:1145.5px;width:400px;text-align:center;top:753.8px;">прав</div><div class="t " style="left:1145.5px;width:400px;text-align:center;top:770.6px;">лен</div><div class="a" style="left:290px;top:919px;width:1407px;height:1px;background:#d2d2d2"></div><div class="a" style="left:292px;top:924px;width:46px;height:24px;background:#fff;border:1px solid #c6c6c6;border-radius:4px"></div><svg class="a" style="left:312px;top:930px" width="4" height="13" viewBox="0 0 4 13" fill="none" stroke-linecap="round" stroke-linejoin="round"><circle cx="2" cy="2" r="1.4" fill="#111" stroke="none"/><circle cx="2" cy="6.5" r="1.4" fill="#111" stroke="none"/><circle cx="2" cy="11" r="1.4" fill="#111" stroke="none"/></svg><div class="a" style="left:1543px;top:924px;width:46px;height:24px;background:#fff;border:1px solid #c6c6c6;border-radius:4px"></div><svg class="a" style="left:1557px;top:928px" width="16" height="16" viewBox="0 0 16 16" fill="none" stroke-linecap="round" stroke-linejoin="round"><path d="M2.7 6.8A5.8 5.8 0 0 1 12.2 3.4" stroke="#333" stroke-width="1.6" stroke-linecap="butt"/><path d="M14.7 1L14.7 6.8L9.7 6.8Z" fill="#333" stroke="none"/><path d="M14 8.6A5.8 5.8 0 0 1 4.8 12.4" stroke="#4cc2f1" stroke-width="1.6" stroke-linecap="butt"/><path d="M2.2 9.1L6.9 9.1L2.2 14.9Z" fill="#4cc2f1" stroke="none"/></svg><div class="a" style="left:1593px;top:924px;width:102px;height:24px;background:#fff;border:1px solid #c6c6c6;border-radius:4px"></div><div class="t " style="left:1629px;top:928.5px;">Закрыть</div><svg class="a" style="left:1610px;top:930px" width="12" height="12" viewBox="0 0 12 12" fill="none" stroke-linecap="round" stroke-linejoin="round"><path d="M0.8 0.8L11.2 11.2M11.2 0.8L0.8 11.2" stroke="#222" stroke-width="1.5"/></svg><svg class="a" style="left:0px;top:0px" width="1705" height="952" viewBox="0 0 1705 952" fill="none" stroke-linecap="round" stroke-linejoin="round">
<path d="M294 318.3 C 700 318.8, 1200 320.5, 1677 321.3" stroke="#fd3a3f" stroke-width="3.7"/>
<path d="M287 574.8 C 800 575.2, 1300 576.5, 1681 577.3" stroke="#fd3a3f" stroke-width="3.7"/>
<path d="M625.6 620.5 L506 661" stroke="#fd3a3f" stroke-width="4"/>
<path d="M497 665.3 L508.4 653.9 L512.9 667.6Z" fill="#fd3a3f" stroke="#fd3a3f" stroke-width="2"/>
<path d="M630.5 642.4 L497 688.5" stroke="#fd3a3f" stroke-width="4"/>
<path d="M488.5 692.3 L500 681 L504 694.7Z" fill="#fd3a3f" stroke="#fd3a3f" stroke-width="2"/>
</svg><svg class="a" style="left:332px;top:444px" width="15" height="15" viewBox="0 0 15 15" fill="none" stroke-linecap="round" stroke-linejoin="round"><circle cx="7.5" cy="7.3" r="5.9" stroke="#4cc2f1" stroke-width="1.3"/><path d="M4.6 5.6L7.5 8.9L10.4 5.6" stroke="#444" stroke-width="1.6"/></svg><div class="a" style="left:1678px;top:222px;width:1px;height:5px;background:#aaa"></div></body></html>
